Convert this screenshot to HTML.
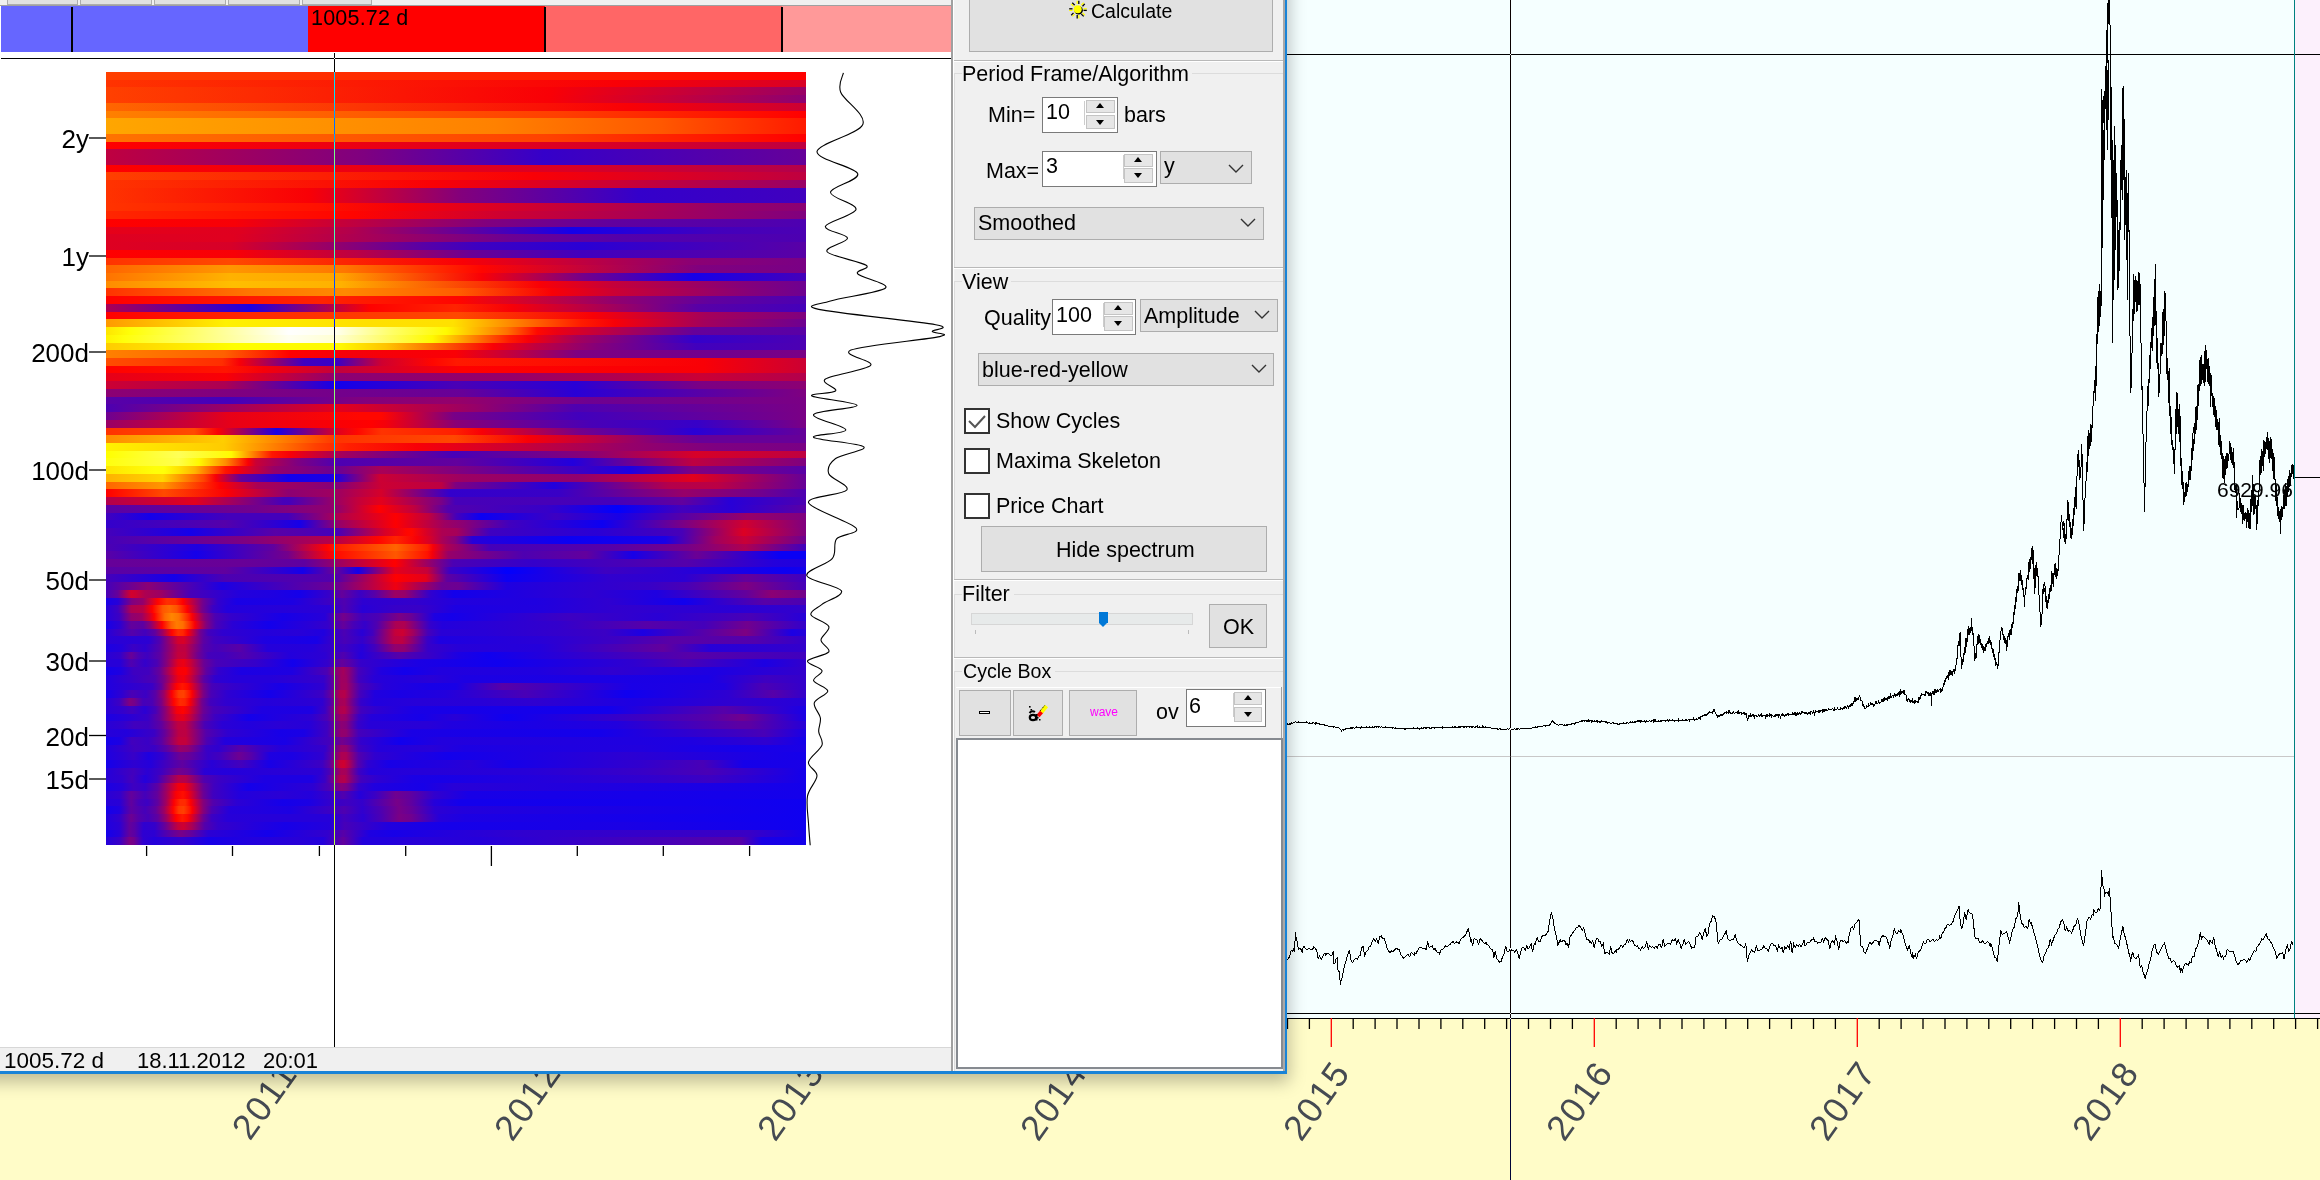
<!DOCTYPE html>
<html><head><meta charset="utf-8">
<style>
*{box-sizing:border-box;}
html,body{margin:0;padding:0;}
body{width:2320px;height:1180px;overflow:hidden;position:relative;background:#fffcc8;font-family:"Liberation Sans",sans-serif;color:#000;}
.a{position:absolute;}
.t{position:absolute;white-space:nowrap;line-height:1;}
#chart{left:1286px;top:0;width:1034px;height:1013px;background:#f5ffff;}
#pink{left:2295px;top:0;width:25px;height:1013px;background:#fcf0fc;}
svg{position:absolute;left:0;top:0;overflow:visible;}
#lwin{left:0;top:0;width:951px;height:1071px;background:#fff;overflow:hidden;}
#panel{left:951px;top:0;width:336px;height:1073px;background:#f0f0f0;overflow:hidden;}
.btn{position:absolute;background:#e1e1e1;border:1px solid #adadad;}
.spin{position:absolute;background:#fff;border:1px solid #7a7a7a;}
.sb{position:absolute;background:#e6e6e6;border:1px solid #c4c4c4;}
.combo{position:absolute;background:#e1e1e1;border:1px solid #adadad;}
.sep{position:absolute;left:3px;width:329px;height:1px;background:#b9b9b9;}
.sepw{position:absolute;left:3px;width:329px;height:1px;background:#fff;}
.gl{position:absolute;height:1px;background:#dcdcdc;}
.cb{position:absolute;width:26px;height:26px;border:2px solid #333;background:#fff;}
.f21{font-size:21.5px;}
</style></head><body>
<div id="chart" class="a"></div>
<div id="pink" class="a"></div>
<div class="a" style="left:1286px;top:756px;width:1009px;height:1px;background:#c8c8c8"></div>
<div class="a" style="left:1286px;top:54px;width:1034px;height:1px;background:#000"></div>
<div class="a" style="left:1286px;top:1013px;width:1034px;height:1px;background:#000"></div>
<div class="a" style="left:1286px;top:1014px;width:1009px;height:4px;background:#f5ffff"></div><div class="a" style="left:2295px;top:1014px;width:25px;height:4px;background:#fcf0fc"></div>
<div class="a" style="left:2294px;top:0;width:1px;height:1018px;background:#008080"></div>
<div class="a" style="left:0px;top:1018px;width:2320px;height:1px;background:#000"></div>
<div class="a" style="left:2295px;top:477px;width:25px;height:1px;background:#000"></div>
<div class="t" style="left:2217px;top:479px;font-size:21px;">6929.96</div>
<svg width="2320" height="1180" viewBox="0 0 2320 1180">
<path d="M1945.5,678.5V682.1M1946.5,676.6V679.3M1947.5,674.5V677.5M1948.5,673.2V674.6M1949.5,670.8V674.7M1950.5,670.3V675.2M1951.5,670.8V672.8M1952.5,670.7V672.3M1953.5,671.0V672.0M1954.5,670.5V674.1M1955.5,665.9V669.1M1956.5,659.5V661.9M1959.5,638.4V642.3M1960.5,637.1V638.9M1961.5,664.8V668.8M1962.5,659.5V664.8M1963.5,656.9V661.1M1964.5,650.9V655.2M1965.5,647.5V652.6M1966.5,643.5V645.7M1968.5,632.5V634.7M1969.5,629.1V633.8M1970.5,627.0V631.5M1971.5,625.8V629.4M1972.5,626.9V630.1M1973.5,636.3V642.1M1974.5,648.7V653.5M1975.5,653.4V658.0M1976.5,647.6V652.4M1977.5,640.7V645.3M1978.5,634.1V636.0M1979.5,635.4V638.7M1980.5,639.0V642.6M1982.5,644.5V650.0M1983.5,648.1V652.6M1984.5,646.7V648.7M1985.5,643.8V647.6M1988.5,641.5V643.7M1989.5,639.0V643.1M1990.5,639.6V644.5M1991.5,643.4V645.5M1992.5,647.8V649.5M1993.5,649.9V654.7M1994.5,653.7V657.0M1995.5,659.0V661.6M1996.5,663.0V665.1M1997.5,667.0V668.9M2000.5,635.1V640.3M2001.5,630.3V631.3M2003.5,633.9V637.3M2004.5,638.3V643.4M2005.5,640.0V643.6M2006.5,640.5V646.8M2007.5,638.1V644.0M2009.5,633.2V639.9M2011.5,628.0V635.1M2012.5,622.1V626.7M2013.5,614.1V617.4M2014.5,605.1V614.5M2015.5,600.6V607.4M2016.5,593.8V601.8M2017.5,585.9V590.2M2018.5,580.4V585.1M2019.5,573.7V581.4M2021.5,580.4V583.7M2022.5,586.7V589.8M2024.5,598.4V606.5M2025.5,588.4V593.4M2026.5,578.6V589.4M2028.5,566.6V572.8M2029.5,562.2V572.2M2030.5,556.5V568.7M2031.5,554.4V560.3M2032.5,558.5V564.1M2033.5,570.4V576.1M2034.5,579.4V587.6M2035.5,574.4V582.0M2036.5,562.3V571.2M2037.5,569.8V574.6M2038.5,586.1V589.2M2039.5,601.8V604.5M2040.5,615.3V620.6M2041.5,615.7V622.9M2043.5,589.1V594.1M2044.5,587.5V591.8M2045.5,592.3V595.8M2046.5,595.9V602.7M2047.5,600.1V606.2M2048.5,594.3V599.3M2050.5,586.9V591.5M2051.5,578.5V586.0M2052.5,573.3V584.0M2054.5,569.0V574.7M2055.5,567.7V577.4M2056.5,569.9V578.8M2059.5,545.2V553.3M2062.5,524.2V530.4M2063.5,527.5V537.8M2064.5,534.6V541.0M2065.5,538.5V543.9M2066.5,523.8V527.6M2067.5,505.3V519.9M2068.5,509.1V521.3M2070.5,528.1V535.7M2071.5,527.9V539.3M2072.5,518.9V530.7M2073.5,513.3V525.6M2075.5,489.1V507.0M2076.5,476.9V485.1M2077.5,463.3V476.3M2078.5,450.1V466.0M2079.5,459.5V474.3M2080.5,468.4V476.1M2081.5,448.4V465.8M2083.5,518.8V524.3M2084.5,505.0V520.9M2085.5,482.9V489.1M2086.5,461.5V471.8M2087.5,451.3V456.0M2088.5,437.5V448.9M2089.5,432.8V441.0M2090.5,431.5V441.0M2091.5,425.8V436.1M2092.5,413.8V424.0M2093.5,399.4V405.3M2094.5,379.6V393.3M2096.5,334.3V345.9M2097.5,297.1V336.5M2098.5,299.8V332.1M2099.5,284.4V326.3M2100.5,291.2V317.4M2101.5,254.0V280.7M2102.5,123.6V143.2M2103.5,108.1V123.3M2104.5,91.0V128.7M2106.5,55.3V86.4M2107.5,30.3V49.8M2108.5,17.0V23.8M2109.5,-4.5V22.0M2110.5,48.9V61.0M2111.5,122.2V165.0M2112.5,309.7V338.9M2113.5,241.0V265.2M2114.5,161.3V184.3M2115.5,160.1V182.2M2116.5,198.3V216.7M2117.5,235.7V251.0M2118.5,274.8V287.3M2120.5,192.9V229.6M2121.5,153.8V179.3M2122.5,101.2V140.8M2123.5,95.5V132.5M2124.5,145.6V172.6M2127.5,200.4V235.7M2128.5,173.3V190.4M2129.5,256.7V268.4M2130.5,351.2V366.1M2131.5,359.2V376.9M2132.5,311.9V340.6M2133.5,285.2V320.6M2134.5,279.7V313.9M2136.5,279.7V312.0M2137.5,282.3V294.0M2138.5,282.1V294.5M2139.5,273.3V305.3M2140.5,291.8V325.2M2142.5,400.8V410.1M2143.5,451.1V459.5M2145.5,468.9V476.3M2146.5,423.8V431.4M2148.5,383.2V396.9M2149.5,370.3V382.8M2150.5,355.5V368.8M2151.5,342.8V348.1M2152.5,325.0V350.6M2153.5,298.7V335.6M2154.5,282.5V325.7M2155.5,295.8V324.8M2156.5,326.6V339.2M2157.5,350.4V368.8M2158.5,373.7V393.6M2159.5,374.3V385.2M2160.5,360.3V364.7M2161.5,347.6V356.2M2162.5,331.7V340.6M2163.5,314.7V345.0M2164.5,292.5V336.1M2165.5,303.0V313.8M2167.5,368.7V380.2M2168.5,383.8V398.2M2169.5,399.6V416.1M2170.5,418.1V434.4M2173.5,451.1V457.1M2174.5,457.5V465.4M2175.5,435.3V439.0M2176.5,405.3V419.6M2177.5,396.2V404.6M2178.5,409.2V427.6M2179.5,429.2V442.4M2180.5,439.3V450.0M2181.5,458.4V472.4M2182.5,470.9V489.0M2183.5,487.0V500.7M2185.5,486.7V492.1M2187.5,483.5V492.3M2188.5,476.8V486.9M2189.5,474.7V479.6M2190.5,465.6V471.9M2191.5,452.0V462.9M2192.5,445.6V459.6M2193.5,438.5V450.5M2194.5,423.4V444.4M2196.5,406.0V418.1M2197.5,399.9V416.9M2199.5,381.9V391.4M2200.5,372.5V382.5M2201.5,367.6V384.1M2202.5,364.4V380.0M2203.5,363.8V382.8M2204.5,368.3V377.0M2205.5,362.9V381.5M2206.5,359.9V369.0M2207.5,358.8V368.1M2208.5,358.0V377.1M2209.5,366.1V374.9M2210.5,374.2V384.4M2211.5,381.5V396.1M2212.5,392.5V401.9M2214.5,404.0V416.6M2215.5,408.3V427.4M2216.5,413.3V430.2M2218.5,425.2V445.0M2220.5,439.6V454.7M2221.5,448.3V458.9M2222.5,458.4V478.0M2223.5,465.3V471.0M2224.5,467.0V482.7M2225.5,468.7V474.3M2226.5,459.3V469.2M2227.5,455.6V468.4M2229.5,446.4V451.7M2230.5,446.2V459.2M2231.5,448.7V454.9M2232.5,451.6V464.5M2233.5,451.1V467.7M2234.5,471.6V485.8M2236.5,503.4V518.4M2237.5,501.7V505.4M2239.5,493.1V503.1M2240.5,498.0V512.0M2241.5,505.8V509.1M2242.5,511.9V523.7M2243.5,511.1V517.9M2244.5,513.4V519.6M2246.5,512.8V528.0M2247.5,514.0V520.3M2248.5,517.8V527.5M2249.5,516.1V523.3M2250.5,517.1V523.9M2251.5,496.7V511.6M2252.5,495.8V506.2M2253.5,500.1V514.1M2254.5,499.0V508.2M2255.5,502.5V509.1M2256.5,505.3V512.2M2257.5,506.9V515.2M2258.5,491.3V502.9M2259.5,473.8V483.9M2261.5,455.3V462.5M2262.5,451.4V461.9M2263.5,449.9V455.6M2265.5,441.6V453.0M2266.5,437.6V449.4M2267.5,440.7V450.4M2268.5,444.2V450.8M2269.5,446.6V463.1M2270.5,446.4V458.3M2271.5,454.2V458.7M2272.5,454.8V470.7M2273.5,464.1V479.1M2274.5,473.6V478.8M2275.5,483.8V491.1M2276.5,489.3V501.7M2277.5,502.0V515.7M2278.5,509.7V517.1M2279.5,513.3V519.0M2280.5,508.7V524.1M2281.5,511.4V516.9M2282.5,506.5V517.0M2283.5,499.8V509.3M2284.5,490.4V504.1M2285.5,486.5V503.3M2286.5,485.6V495.4M2287.5,479.4V497.3M2288.5,475.7V492.2M2289.5,470.4V486.3M2290.5,472.9V478.3M2291.5,464.8V475.7M2293.5,472.0V478.7M2101.5,89V250M2102.5,100V248M2103.5,130V200M2104.5,110V160M2106.5,80V130M2107.5,70V150M2108.5,60V120M2110.5,90V160M2112.5,140V240M2113.5,160V300M2114.5,180V280M2115.5,150V250M2117.5,200V290M2120.5,160V230M2122.5,95V200M2123.5,92V180M2124.5,120V240M2126.5,170V260M2127.5,200V300M2129.5,230V290" stroke="#000" stroke-width="1" fill="none" shape-rendering="crispEdges"/>
<polyline points="1286.4,724.7 1286.4,725.0 1286.9,724.7 1287.4,723.5 1287.9,724.5 1288.4,724.1 1288.9,724.3 1289.4,724.0 1289.9,723.6 1290.4,724.2 1290.9,723.1 1291.4,723.1 1291.9,722.8 1292.4,723.5 1292.9,723.1 1293.4,722.7 1293.9,722.6 1294.4,722.6 1294.9,721.9 1295.4,721.6 1295.9,721.7 1296.1,722.0 1296.4,722.4 1296.9,722.0 1297.4,722.2 1297.9,722.0 1298.4,722.0 1298.9,721.6 1299.4,722.4 1299.9,722.6 1300.4,722.4 1300.9,721.9 1301.4,722.6 1301.9,722.2 1302.4,722.5 1302.9,722.5 1303.4,722.0 1303.9,722.0 1304.4,722.5 1304.9,722.8 1305.4,722.6 1305.9,722.8 1306.4,722.5 1306.9,721.7 1307.4,722.3 1307.9,722.8 1308.4,723.8 1308.9,723.6 1309.4,722.9 1309.9,723.1 1310.4,723.2 1310.9,723.3 1311.4,723.2 1311.9,723.5 1312.4,723.0 1312.9,723.3 1313.4,722.8 1313.9,722.8 1314.4,723.6 1314.9,723.7 1315.2,723.5 1315.4,723.8 1315.9,722.3 1316.4,723.5 1316.9,723.9 1317.4,723.8 1317.9,723.9 1318.4,723.9 1318.9,723.5 1319.4,724.0 1319.9,724.1 1320.4,724.4 1320.9,724.2 1321.4,724.5 1321.9,724.7 1322.4,724.6 1322.9,725.1 1323.4,725.0 1323.9,724.8 1324.4,725.0 1324.9,725.7 1325.4,725.3 1325.9,725.7 1326.4,725.5 1326.9,725.6 1327.4,725.6 1327.9,725.9 1328.4,726.0 1328.9,726.9 1329.4,726.7 1329.9,725.9 1330.4,726.6 1330.9,726.9 1331.4,726.9 1331.9,727.0 1332.4,726.5 1332.9,726.5 1333.4,727.0 1333.9,727.4 1334.4,726.8 1334.9,727.0 1335.4,727.8 1335.9,727.8 1336.4,727.3 1336.9,727.7 1337.4,727.5 1337.9,727.6 1338.4,727.7 1338.6,728.0 1338.9,728.1 1339.4,728.4 1339.9,729.0 1340.4,729.4 1340.9,729.6 1341.4,730.7 1341.5,730.3 1341.9,729.9 1342.4,729.7 1342.9,729.6 1343.4,729.8 1343.9,730.2 1344.4,729.6 1344.9,729.2 1345.4,729.0 1345.9,729.3 1346.4,728.7 1346.9,728.8 1347.4,729.0 1347.9,728.8 1348.4,728.4 1348.9,728.4 1349.4,728.2 1349.9,728.1 1350.3,728.0 1350.4,728.0 1350.9,727.7 1351.4,727.9 1351.9,728.2 1352.4,728.2 1352.9,727.7 1353.4,727.6 1353.9,728.0 1354.4,728.0 1354.9,728.0 1355.4,727.5 1355.9,727.4 1356.4,727.1 1356.9,727.8 1357.4,727.9 1357.9,727.0 1358.4,727.9 1358.9,727.7 1359.4,727.3 1359.9,727.6 1360.4,727.3 1360.9,728.4 1361.4,726.8 1361.9,727.5 1362.4,727.8 1362.9,727.6 1363.4,727.5 1363.9,727.3 1364.4,727.7 1364.9,727.8 1365.4,727.4 1365.9,727.7 1366.4,727.1 1366.9,727.6 1367.4,727.3 1367.9,727.4 1368.4,727.3 1368.9,727.0 1369.4,726.9 1369.9,727.5 1370.4,727.2 1370.9,727.3 1371.4,727.2 1371.9,727.5 1372.4,726.9 1372.9,727.3 1373.4,727.1 1373.9,727.0 1374.4,726.9 1374.9,727.2 1375.4,727.0 1375.9,726.1 1376.4,726.9 1376.9,727.3 1377.4,726.7 1377.9,727.0 1378.4,727.2 1378.9,726.6 1379.4,726.6 1379.6,726.8 1379.9,727.0 1380.4,727.2 1380.9,727.2 1381.4,726.9 1381.9,726.7 1382.4,727.3 1382.9,727.0 1383.4,727.7 1383.9,727.8 1384.4,727.2 1384.9,727.1 1385.4,727.0 1385.9,727.7 1386.4,727.7 1386.9,727.6 1387.4,727.3 1387.9,727.6 1388.4,727.4 1388.9,727.9 1389.4,727.7 1389.9,727.7 1390.4,727.9 1390.9,727.8 1391.4,727.9 1391.9,727.6 1392.4,728.0 1392.9,728.2 1393.4,727.9 1393.9,728.1 1394.4,728.2 1394.9,728.0 1395.4,727.8 1395.9,728.4 1396.4,728.4 1396.9,728.1 1397.4,728.8 1397.9,728.6 1398.4,728.3 1398.9,728.5 1399.4,728.4 1399.9,728.3 1400.4,728.3 1400.9,728.8 1401.4,728.4 1401.9,728.6 1402.4,729.0 1402.9,728.9 1403.0,728.8 1403.4,728.7 1403.9,728.8 1404.4,728.5 1404.9,729.4 1405.4,729.0 1405.9,728.7 1406.4,728.8 1406.9,728.8 1407.4,728.9 1407.9,728.7 1408.4,728.3 1408.9,728.7 1409.4,728.6 1409.9,728.4 1410.4,728.2 1410.9,728.7 1411.4,728.6 1411.9,728.8 1412.4,728.7 1412.9,728.2 1413.4,727.7 1413.9,728.3 1414.4,728.6 1414.9,728.7 1415.4,728.7 1415.9,728.6 1416.4,728.6 1416.9,728.6 1417.4,728.5 1417.9,727.6 1418.4,728.5 1418.9,728.7 1419.4,729.0 1419.9,728.2 1420.4,728.5 1420.9,728.2 1421.4,728.3 1421.9,727.8 1422.4,728.1 1422.9,728.2 1423.4,727.8 1423.9,728.2 1424.4,727.9 1424.9,728.1 1425.4,728.3 1425.9,727.6 1426.4,727.8 1426.9,728.3 1427.4,727.9 1427.9,727.8 1428.4,727.7 1428.9,728.1 1429.4,727.8 1429.9,728.3 1430.4,728.3 1430.9,728.6 1431.4,727.8 1431.9,728.0 1432.4,727.2 1432.9,727.5 1433.4,727.8 1433.9,727.9 1434.4,728.1 1434.9,727.7 1435.4,727.7 1435.9,727.7 1436.4,727.9 1436.9,728.1 1437.4,727.7 1437.9,727.8 1438.4,727.9 1438.9,727.9 1439.4,727.6 1439.9,727.6 1440.4,727.9 1440.9,727.6 1441.4,727.5 1441.9,727.6 1442.4,727.9 1442.9,726.8 1443.4,727.2 1443.9,727.7 1444.4,727.2 1444.9,727.8 1445.4,727.8 1445.9,727.4 1446.4,727.6 1446.9,728.2 1447.4,727.7 1447.9,727.3 1448.4,727.6 1448.9,727.5 1449.4,727.7 1449.9,727.7 1450.4,727.2 1450.9,727.6 1451.4,727.3 1451.9,727.1 1452.4,727.5 1452.9,726.5 1453.4,727.5 1453.9,727.6 1454.4,726.9 1454.9,727.4 1455.4,726.9 1455.9,727.3 1456.4,727.1 1456.9,727.3 1457.4,727.5 1457.9,727.0 1458.4,726.7 1458.9,727.2 1459.4,726.8 1459.9,727.4 1460.4,726.9 1460.9,726.7 1461.4,726.8 1461.9,726.6 1462.4,726.9 1462.9,726.8 1463.4,726.7 1463.9,727.2 1464.4,726.9 1464.9,727.2 1465.4,726.6 1465.9,726.8 1466.4,727.2 1466.9,726.3 1467.4,726.5 1467.6,726.8 1467.9,726.6 1468.4,726.3 1468.9,726.8 1469.4,727.0 1469.9,726.7 1470.4,726.7 1470.9,726.6 1471.4,727.1 1471.9,727.3 1472.4,727.2 1472.9,726.7 1473.4,726.9 1473.9,727.0 1474.4,727.3 1474.9,727.0 1475.4,727.3 1475.9,726.8 1476.4,726.7 1476.9,727.1 1477.4,726.1 1477.9,727.3 1478.4,727.5 1478.9,727.2 1479.4,726.9 1479.9,727.5 1480.4,727.2 1480.9,727.1 1481.4,727.3 1481.9,727.4 1482.4,726.3 1482.9,727.5 1483.4,727.0 1483.9,727.5 1484.4,727.5 1484.9,727.1 1485.2,727.3 1485.4,727.0 1485.9,727.7 1486.4,727.4 1486.9,727.8 1487.4,727.6 1487.9,727.6 1488.4,727.5 1488.9,728.1 1489.4,727.7 1489.9,727.8 1490.4,727.9 1490.9,727.7 1491.4,728.1 1491.9,728.3 1492.4,728.5 1492.9,727.9 1493.4,728.3 1493.9,728.2 1494.4,728.7 1494.9,728.6 1495.4,728.5 1495.9,728.9 1496.4,728.4 1496.9,728.5 1497.4,729.0 1497.9,728.7 1498.4,729.2 1498.9,728.9 1499.4,728.7 1499.9,728.4 1500.4,729.3 1500.9,728.9 1501.4,729.0 1501.9,729.6 1502.4,729.7 1502.7,729.4 1502.9,729.3 1503.4,729.3 1503.9,729.4 1504.4,729.3 1504.9,729.1 1505.4,729.4 1505.9,729.6 1506.4,729.5 1506.9,729.0 1507.4,728.7 1507.9,729.1 1508.4,729.1 1508.9,729.0 1509.4,728.9 1509.9,729.1 1510.4,728.8 1510.9,729.4 1511.4,729.4 1511.9,729.0 1512.4,729.1 1512.9,729.6 1513.4,729.3 1513.9,729.0 1514.4,728.9 1514.9,729.0 1515.4,729.1 1515.9,729.1 1516.4,728.8 1516.9,729.2 1517.4,729.1 1517.9,728.5 1518.4,728.5 1518.9,729.1 1519.4,729.0 1519.9,729.0 1520.4,728.8 1520.9,728.5 1521.4,728.6 1521.9,728.7 1522.4,728.6 1522.9,729.0 1523.4,728.9 1523.9,728.5 1524.4,728.5 1524.9,728.6 1525.4,728.5 1525.9,728.5 1526.4,728.6 1526.9,728.6 1527.4,728.9 1527.9,728.5 1528.4,728.2 1528.9,728.8 1529.1,728.5 1529.4,728.1 1529.9,728.3 1530.4,728.2 1530.9,728.2 1531.4,728.1 1531.9,728.2 1532.4,727.8 1532.9,727.8 1533.4,727.9 1533.9,727.7 1534.4,727.4 1534.9,727.6 1535.4,727.1 1535.9,728.0 1536.4,727.4 1536.9,727.4 1537.4,727.0 1537.9,726.7 1538.4,726.8 1538.9,727.1 1539.4,726.5 1539.9,726.7 1540.4,726.2 1540.9,726.1 1541.4,726.1 1541.9,726.2 1542.4,726.2 1542.9,726.3 1543.4,725.7 1543.9,726.1 1544.4,725.8 1544.9,725.1 1545.4,726.1 1545.9,725.3 1546.4,725.7 1546.9,725.2 1547.4,725.5 1547.9,724.9 1548.4,725.6 1548.9,724.9 1549.4,724.7 1549.6,725.0 1549.9,724.9 1550.4,723.7 1550.9,723.0 1551.4,722.0 1551.9,721.4 1552.4,721.0 1552.6,720.6 1552.9,720.9 1553.4,721.9 1553.9,722.2 1554.4,722.3 1554.9,723.3 1555.4,723.4 1555.9,723.5 1556.4,724.4 1556.9,724.9 1557.0,725.0 1557.4,724.8 1557.9,724.8 1558.4,725.4 1558.9,725.2 1559.4,724.9 1559.9,724.8 1560.4,724.6 1560.9,725.2 1561.4,724.8 1561.9,724.7 1562.4,724.7 1562.9,724.9 1563.4,725.2 1563.9,725.1 1564.4,724.7 1564.9,725.8 1565.4,725.1 1565.9,725.4 1566.4,724.7 1566.9,725.5 1567.2,725.0 1567.4,725.4 1567.9,724.5 1568.4,724.5 1568.9,724.7 1569.4,724.5 1569.9,724.3 1570.4,724.6 1570.9,724.1 1571.4,724.3 1571.9,723.4 1572.4,723.8 1572.9,724.0 1573.4,723.5 1573.9,723.7 1574.4,724.1 1574.9,722.9 1575.4,722.7 1575.9,723.2 1576.4,722.5 1576.9,723.1 1577.4,722.5 1577.9,722.8 1578.4,722.0 1578.9,722.2 1579.4,721.5 1579.9,721.3 1580.4,721.2 1580.9,721.7 1581.4,721.1 1581.9,721.6 1582.4,720.9 1582.9,720.5 1583.4,720.5 1583.9,721.1 1584.4,721.1 1584.8,720.6 1584.9,720.8 1585.4,720.3 1585.9,720.4 1586.4,721.2 1586.9,720.1 1587.4,720.5 1587.9,721.2 1588.4,720.1 1588.9,721.5 1589.4,721.4 1589.9,720.8 1590.4,721.0 1590.9,720.8 1591.4,720.6 1591.9,722.3 1592.4,720.6 1592.9,721.0 1593.4,721.5 1593.9,721.9 1594.4,720.6 1594.9,721.4 1595.4,721.5 1595.9,721.2 1596.4,721.3 1596.9,720.7 1597.4,721.8 1597.9,720.6 1598.4,721.7 1598.9,721.3 1599.4,721.5 1599.9,722.7 1600.4,722.6 1600.9,721.2 1601.4,720.9 1601.9,721.3 1602.4,721.4 1602.4,721.5 1602.9,721.4 1603.4,721.6 1603.9,721.6 1604.4,721.7 1604.9,721.7 1605.4,722.1 1605.9,721.0 1606.4,721.9 1606.9,722.3 1607.4,723.0 1607.9,723.0 1608.4,722.7 1608.9,723.0 1609.4,722.7 1609.9,722.6 1610.4,723.5 1610.9,723.0 1611.4,723.1 1611.9,723.2 1612.4,722.1 1612.9,722.4 1613.4,722.9 1613.9,724.0 1614.4,723.1 1614.9,723.5 1615.4,723.6 1615.9,723.5 1616.4,723.5 1616.9,723.6 1617.0,724.1 1617.4,723.7 1617.9,724.3 1618.4,724.2 1618.9,724.0 1619.4,724.0 1619.9,722.9 1620.4,723.7 1620.9,723.8 1621.4,723.9 1621.9,723.3 1622.4,723.2 1622.9,723.5 1623.4,723.6 1623.9,722.8 1624.4,723.1 1624.9,723.4 1625.4,723.2 1625.9,723.8 1626.4,722.5 1626.9,722.5 1627.4,722.5 1627.9,722.8 1628.4,723.6 1628.9,722.9 1629.4,722.2 1629.9,722.1 1630.4,722.6 1630.9,721.8 1631.4,722.3 1631.9,722.2 1632.4,721.8 1632.9,722.3 1633.4,722.6 1633.9,722.5 1634.4,722.2 1634.9,721.4 1635.4,722.3 1635.9,721.8 1636.4,721.4 1636.9,722.1 1637.4,721.0 1637.6,721.5 1637.9,721.9 1638.4,721.2 1638.9,722.0 1639.4,720.8 1639.9,721.2 1640.4,722.1 1640.9,720.8 1641.4,721.0 1641.9,722.0 1642.4,721.9 1642.9,721.1 1643.4,721.4 1643.9,721.2 1644.4,721.0 1644.9,721.9 1645.4,722.3 1645.9,721.0 1646.4,720.8 1646.9,721.4 1647.4,721.1 1647.9,721.2 1648.4,721.3 1648.9,721.2 1649.4,720.7 1649.9,720.6 1650.4,721.5 1650.9,721.5 1651.4,720.7 1651.9,721.2 1652.4,720.6 1652.9,721.2 1653.4,720.4 1653.9,722.2 1654.4,720.3 1654.9,721.3 1655.4,719.9 1655.9,721.4 1656.4,721.4 1656.9,720.9 1657.4,721.2 1657.9,721.5 1658.4,721.0 1658.9,721.7 1659.4,721.5 1659.9,721.3 1660.4,721.2 1660.9,720.2 1661.4,721.3 1661.9,721.3 1662.4,720.1 1662.9,720.2 1663.4,720.6 1663.9,721.1 1664.4,720.9 1664.9,720.7 1665.4,721.2 1665.9,720.0 1666.4,720.3 1666.9,719.9 1667.4,719.6 1667.9,720.5 1668.4,720.3 1668.9,721.2 1669.4,720.8 1669.9,719.8 1670.4,720.4 1670.9,720.3 1671.4,720.3 1671.9,720.6 1672.4,720.1 1672.9,719.8 1673.4,720.5 1673.9,720.8 1674.4,721.0 1674.9,720.0 1675.4,720.7 1675.9,720.1 1676.4,720.1 1676.9,720.2 1677.4,720.3 1677.9,720.9 1678.4,719.5 1678.9,721.5 1679.4,720.7 1679.9,720.8 1680.4,720.5 1680.9,720.5 1681.4,720.9 1681.9,720.4 1682.4,720.5 1682.9,719.6 1683.4,720.4 1683.9,720.7 1684.4,720.8 1684.9,720.2 1685.4,720.3 1685.9,719.8 1686.4,720.0 1686.9,719.7 1687.4,720.1 1687.9,720.2 1688.4,719.5 1688.9,720.0 1689.4,720.6 1689.9,719.5 1690.4,719.2 1690.9,719.2 1691.4,719.4 1691.9,719.6 1692.4,719.6 1692.9,719.8 1693.4,718.3 1693.9,719.5 1694.4,719.8 1694.9,720.2 1695.4,719.5 1695.9,720.0 1696.2,719.7 1696.4,719.5 1696.9,718.6 1697.4,719.5 1697.9,719.5 1698.4,717.3 1698.9,717.6 1699.4,718.0 1699.9,717.1 1700.4,718.4 1700.9,716.8 1701.4,716.8 1701.9,716.0 1702.0,716.8 1702.4,716.8 1702.9,715.8 1703.4,715.8 1703.9,715.3 1704.4,715.2 1704.9,714.7 1705.4,714.5 1705.9,715.4 1706.4,714.9 1706.9,714.8 1707.4,714.6 1707.9,713.3 1708.4,713.0 1708.9,712.1 1709.4,711.8 1709.9,712.8 1710.4,712.8 1710.9,712.7 1711.4,712.0 1711.9,712.0 1712.4,713.7 1712.9,711.4 1713.4,709.8 1713.8,710.3 1713.9,711.2 1714.4,710.5 1714.9,712.0 1715.4,712.9 1715.9,713.7 1716.4,715.1 1716.9,715.0 1717.4,715.9 1717.9,717.7 1718.2,716.8 1718.4,716.4 1718.9,715.7 1719.4,715.5 1719.9,716.4 1720.4,715.1 1720.9,715.6 1721.4,715.6 1721.9,714.1 1722.4,715.4 1722.9,714.9 1723.4,713.7 1723.9,713.4 1724.4,712.9 1724.9,713.2 1725.4,712.7 1725.5,712.7 1725.9,713.1 1726.4,713.2 1726.9,711.8 1727.4,712.8 1727.9,713.1 1728.4,713.2 1728.9,710.2 1729.4,711.7 1729.9,712.2 1730.4,712.2 1730.9,713.4 1731.4,713.9 1731.9,713.8 1732.4,712.3 1732.9,712.7 1733.4,711.9 1733.9,713.1 1734.4,713.7 1734.9,712.9 1735.4,712.7 1735.9,713.0 1736.4,712.4 1736.9,712.5 1737.4,712.1 1737.9,713.3 1738.4,711.8 1738.9,713.4 1739.4,713.7 1739.9,712.3 1740.4,712.3 1740.9,712.7 1741.4,713.8 1741.9,712.7 1742.4,713.2 1742.9,713.0 1743.4,713.5 1743.9,712.5 1744.4,714.1 1744.9,712.4 1745.4,714.1 1745.9,714.5 1746.0,713.3 1746.4,714.5 1746.9,717.6 1747.4,718.3 1747.5,719.7 1747.9,719.1 1748.4,718.0 1748.9,716.3 1749.0,715.6 1749.4,716.2 1749.9,716.3 1750.4,714.8 1750.9,716.7 1751.4,716.3 1751.9,715.8 1752.4,714.6 1752.9,715.4 1753.4,714.7 1753.9,716.3 1754.4,717.3 1754.9,715.8 1755.4,715.1 1755.9,715.0 1756.4,716.5 1756.9,716.5 1757.4,716.5 1757.9,716.1 1758.4,715.0 1758.9,715.8 1759.4,715.9 1759.9,716.2 1760.4,714.9 1760.9,715.8 1761.4,714.6 1761.9,716.5 1762.4,716.0 1762.9,715.4 1763.4,715.7 1763.9,715.7 1764.4,715.2 1764.9,715.8 1765.4,717.4 1765.9,715.1 1766.4,714.8 1766.9,716.3 1767.4,716.3 1767.9,714.8 1768.4,715.6 1768.9,715.2 1769.4,715.8 1769.9,713.7 1770.4,714.7 1770.9,715.4 1771.4,716.3 1771.9,714.7 1772.4,715.4 1772.9,715.5 1773.4,716.3 1773.9,715.9 1774.4,715.7 1774.9,716.4 1775.4,716.1 1775.9,714.7 1776.4,714.7 1776.9,715.2 1777.4,714.6 1777.9,716.0 1778.2,715.6 1778.4,716.3 1778.9,714.6 1779.4,715.1 1779.9,715.4 1780.4,717.6 1780.9,716.1 1781.4,715.1 1781.9,715.7 1782.4,714.3 1782.9,715.8 1783.4,714.7 1783.9,715.1 1784.4,715.9 1784.9,714.9 1785.4,714.4 1785.9,715.5 1786.4,715.6 1786.9,714.5 1787.4,713.9 1787.9,714.5 1788.4,713.9 1788.9,715.3 1789.4,714.6 1789.9,714.5 1790.4,714.2 1790.9,715.0 1791.4,714.4 1791.9,715.1 1792.4,713.5 1792.9,714.8 1793.4,713.3 1793.9,713.3 1794.4,715.0 1794.9,712.3 1795.4,712.9 1795.9,716.4 1796.4,713.5 1796.9,713.4 1797.4,713.8 1797.9,712.8 1798.4,714.1 1798.9,713.0 1799.4,712.9 1799.9,713.9 1800.4,714.4 1800.9,713.3 1801.4,713.3 1801.9,710.9 1802.4,712.7 1802.9,712.7 1803.4,712.4 1803.9,712.2 1804.4,713.1 1804.9,713.0 1805.4,712.5 1805.9,713.7 1806.4,712.6 1806.9,712.9 1807.4,713.8 1807.5,712.7 1807.9,714.1 1808.4,712.2 1808.9,712.3 1809.4,713.4 1809.9,712.2 1810.4,713.3 1810.9,711.5 1811.4,711.6 1811.9,712.0 1812.4,713.6 1812.9,713.0 1813.4,710.5 1813.9,712.5 1814.4,714.5 1814.9,712.8 1815.4,711.1 1815.9,711.6 1816.4,711.2 1816.9,710.9 1817.4,711.7 1817.9,711.3 1818.4,713.2 1818.9,710.9 1819.4,711.8 1819.9,710.0 1820.4,710.9 1820.9,710.0 1821.4,710.3 1821.9,710.9 1822.4,711.6 1822.9,709.7 1823.4,709.6 1823.9,711.6 1824.4,710.9 1824.9,709.8 1825.4,710.1 1825.9,709.1 1826.4,710.1 1826.9,711.0 1827.4,710.4 1827.9,710.0 1828.4,708.9 1828.9,709.9 1829.4,709.2 1829.9,709.4 1830.4,709.2 1830.9,709.4 1831.4,709.2 1831.9,709.6 1832.4,708.4 1832.9,708.9 1833.4,710.5 1833.9,709.8 1834.4,708.2 1834.9,710.2 1835.4,709.5 1835.9,709.2 1836.4,709.4 1836.9,709.8 1837.4,708.1 1837.9,709.0 1838.4,709.7 1838.9,709.1 1839.4,709.1 1839.9,709.3 1840.4,709.5 1840.9,707.8 1841.4,708.6 1841.9,708.8 1842.4,709.2 1842.9,708.0 1843.4,708.4 1843.9,707.4 1844.4,706.7 1844.9,708.8 1845.4,706.7 1845.9,707.4 1846.4,707.9 1846.9,707.1 1847.4,706.2 1847.9,707.0 1848.4,706.9 1848.6,707.4 1848.9,706.7 1849.4,706.0 1849.9,706.8 1850.4,706.3 1850.9,704.2 1851.4,705.8 1851.9,702.8 1852.4,704.8 1852.9,703.8 1853.4,703.3 1853.9,701.7 1854.4,701.8 1854.9,696.9 1855.4,698.8 1855.9,701.7 1856.4,698.8 1856.9,699.9 1857.4,699.3 1857.9,698.6 1858.4,699.2 1858.9,697.0 1859.4,695.5 1859.7,695.7 1859.9,696.9 1860.4,698.9 1860.9,700.2 1861.4,700.1 1861.9,701.1 1862.4,702.6 1862.9,705.6 1863.4,704.9 1863.9,706.3 1864.4,707.1 1864.7,708.9 1864.9,709.0 1865.4,708.4 1865.9,707.9 1866.4,706.7 1866.9,705.8 1867.4,706.2 1867.9,706.8 1868.4,704.8 1868.9,706.6 1869.1,705.1 1869.4,705.1 1869.9,705.0 1870.4,704.9 1870.9,703.0 1871.4,704.4 1871.9,703.7 1872.4,703.4 1872.9,704.7 1873.4,705.8 1873.9,704.0 1874.4,706.3 1874.9,704.6 1875.4,702.7 1875.9,701.7 1876.4,701.8 1876.9,703.6 1877.4,703.2 1877.9,703.2 1878.4,700.6 1878.9,700.9 1879.4,704.0 1879.9,702.2 1880.4,702.3 1880.9,702.2 1881.4,699.5 1881.9,701.4 1882.4,701.0 1882.9,699.8 1883.4,700.6 1883.9,698.5 1884.4,700.7 1884.9,697.1 1885.4,699.3 1885.9,700.0 1886.4,699.0 1886.9,698.2 1887.4,699.5 1887.9,696.8 1888.4,699.3 1888.9,695.7 1889.4,698.0 1889.9,697.7 1890.4,693.0 1890.9,698.0 1891.4,696.8 1891.9,696.3 1892.4,695.1 1892.9,695.1 1893.4,697.0 1893.9,696.5 1894.4,693.2 1894.9,693.8 1895.4,694.4 1895.9,696.6 1896.4,694.3 1896.9,696.0 1897.4,695.4 1897.9,693.1 1898.4,692.7 1898.9,694.0 1899.4,696.9 1899.9,691.3 1900.4,690.3 1900.9,694.3 1901.4,693.2 1901.9,691.1 1902.4,692.6 1902.9,692.0 1903.4,693.6 1903.9,690.0 1904.3,691.3 1904.4,692.0 1904.9,694.8 1905.4,694.6 1905.9,694.9 1906.4,697.4 1906.9,700.1 1907.2,700.0 1907.4,701.7 1907.9,699.8 1908.4,698.9 1908.9,699.0 1909.4,700.7 1909.9,699.4 1910.4,702.6 1910.9,702.5 1911.4,700.6 1911.9,700.7 1912.4,699.5 1912.9,702.4 1913.4,702.2 1913.9,701.4 1914.4,702.5 1914.9,700.7 1915.4,700.8 1915.9,702.2 1916.4,701.3 1916.9,701.7 1917.4,701.6 1917.5,703.0 1917.9,701.1 1918.4,702.9 1918.9,696.6 1919.4,700.1 1919.9,698.5 1920.4,698.1 1920.9,695.3 1921.4,696.0 1921.9,695.8 1921.9,694.2 1922.4,694.4 1922.9,694.5 1923.4,694.7 1923.9,694.1 1924.4,694.8 1924.9,695.9 1925.4,695.5 1925.9,691.2 1926.4,692.8 1926.9,692.6 1927.4,692.8 1927.9,693.0 1928.4,695.4 1928.9,693.0 1929.4,694.4 1929.9,693.0 1930.4,694.5 1930.9,692.7 1931.2,693.3 1931.2,706.0 1931.4,695.7 1931.5,693.0 1931.9,694.5 1932.4,691.0 1932.9,693.6 1933.4,692.7 1933.9,695.0 1934.4,693.0 1934.9,689.5 1935.4,689.4 1935.9,692.6 1936.4,690.2 1936.9,692.7 1937.4,691.3 1937.9,688.9 1938.4,692.1 1938.9,690.2 1939.4,689.1 1939.9,689.2 1940.4,688.7 1940.7,689.1 1940.9,693.3 1941.4,688.9 1941.9,691.6 1942.4,686.7 1942.9,687.9 1943.4,682.6 1943.9,684.8 1944.4,684.2 1944.9,679.9 1945.4,678.9 1945.9,678.3 1946.4,676.6 1946.9,677.1 1947.4,675.5 1947.9,675.0 1948.4,675.1 1948.9,680.0 1949.0,672.5 1949.4,670.3 1949.9,674.6 1950.4,673.8 1950.9,669.7 1951.4,674.9 1951.9,672.8 1952.4,674.8 1952.9,673.4 1953.4,668.7 1953.9,670.2 1954.4,668.9 1954.9,673.2 1954.9,671.3 1955.4,668.2 1955.9,667.7 1956.4,657.8 1956.9,659.4 1957.4,655.8 1957.9,645.7 1958.4,641.5 1958.9,646.2 1959.4,643.5 1959.9,633.9 1960.4,632.0 1960.4,634.5 1960.9,653.9 1961.3,666.6 1961.4,663.4 1961.9,661.1 1962.4,659.1 1962.9,663.2 1963.4,656.9 1963.9,653.5 1964.4,651.3 1964.9,648.0 1965.4,648.9 1965.6,648.8 1965.9,638.4 1966.4,647.0 1966.9,638.0 1967.4,642.1 1967.9,628.9 1968.4,635.4 1968.9,625.8 1969.1,629.8 1969.4,634.6 1969.9,633.3 1970.4,630.1 1970.9,631.7 1971.4,617.8 1971.9,629.5 1972.4,634.8 1972.7,627.4 1972.9,631.7 1973.4,635.8 1973.9,645.0 1974.4,649.0 1974.9,660.8 1975.1,657.1 1975.4,654.8 1975.9,655.6 1976.4,656.6 1976.9,644.7 1977.4,642.0 1977.9,636.8 1978.4,635.9 1978.6,634.5 1978.9,644.1 1979.4,637.9 1979.9,638.7 1980.4,641.2 1980.9,644.1 1981.4,643.6 1981.9,647.5 1982.4,649.2 1982.9,643.9 1983.4,652.1 1983.4,648.8 1983.9,649.0 1984.4,648.9 1984.9,651.3 1985.4,649.2 1985.9,647.8 1986.4,643.6 1986.9,644.8 1987.4,641.9 1987.9,643.2 1988.4,642.0 1988.9,638.8 1989.4,636.4 1989.9,638.5 1990.4,644.3 1990.5,640.5 1990.9,641.8 1991.4,643.9 1991.9,647.9 1992.4,651.0 1992.9,652.9 1993.4,648.9 1993.9,656.3 1994.4,656.1 1994.9,659.9 1995.4,658.3 1995.9,665.7 1996.4,662.8 1996.9,662.6 1997.4,667.4 1997.6,667.8 1997.9,667.2 1998.4,662.5 1998.9,652.5 1999.4,652.1 1999.9,641.6 2000.4,634.2 2000.9,632.4 2001.2,629.8 2001.4,628.8 2001.9,626.8 2002.4,630.5 2002.9,633.1 2003.4,639.5 2003.9,638.6 2004.4,643.2 2004.9,636.5 2005.4,644.2 2005.9,642.0 2005.9,644.0 2006.4,639.9 2006.9,650.7 2007.4,636.0 2007.9,637.6 2008.4,634.2 2008.9,635.0 2009.4,637.2 2009.9,630.2 2010.4,634.7 2010.9,628.7 2011.4,632.7 2011.8,629.8 2011.9,625.9 2012.4,626.7 2012.9,625.0 2013.4,620.9 2013.9,612.7 2014.2,610.8 2014.4,614.2 2014.9,607.0 2015.4,608.7 2015.9,597.8 2016.4,592.8 2016.9,589.1 2017.4,592.9 2017.9,586.8 2018.4,590.7 2018.9,573.0 2019.4,574.6 2019.9,576.9 2020.2,571.7 2020.4,569.9 2020.9,580.5 2021.4,575.0 2021.9,585.1 2022.4,580.0 2022.9,589.7 2023.4,587.6 2023.9,597.4 2024.4,595.5 2024.4,601.3 2024.9,597.6 2025.4,587.6 2025.9,587.5 2026.4,585.8 2026.9,579.6 2027.3,575.2 2027.4,579.1 2027.9,576.4 2028.4,580.4 2028.9,563.4 2029.4,559.0 2029.9,567.1 2030.4,566.4 2030.9,563.0 2031.4,551.1 2031.9,547.8 2032.0,553.4 2032.4,564.4 2032.9,545.8 2033.4,563.1 2033.9,578.5 2034.4,568.1 2034.4,584.7 2034.9,593.9 2035.4,570.3 2035.9,565.2 2036.4,576.1 2036.8,563.4 2036.9,565.3 2037.4,577.3 2037.9,571.9 2038.4,589.4 2038.9,592.0 2039.4,605.7 2039.9,611.3 2040.4,614.3 2040.9,626.8 2041.0,625.0 2041.4,624.7 2041.9,614.9 2042.4,611.0 2042.9,590.0 2043.4,587.9 2043.9,588.7 2043.9,584.7 2044.4,581.9 2044.9,585.4 2045.4,587.5 2045.9,601.3 2046.4,604.7 2046.9,607.5 2047.4,609.3 2047.4,603.7 2047.9,605.5 2048.4,593.8 2048.9,602.4 2049.4,587.9 2049.9,593.4 2050.4,584.7 2050.9,591.8 2051.4,589.0 2051.9,571.2 2052.4,579.1 2052.9,580.7 2053.4,586.6 2053.4,572.9 2053.9,576.0 2054.4,572.4 2054.9,564.7 2055.4,562.9 2055.9,577.4 2056.4,569.1 2056.9,568.5 2057.4,575.7 2057.9,569.4 2058.1,570.5 2058.4,566.2 2058.9,555.8 2059.4,552.9 2059.9,541.0 2060.4,530.7 2060.5,534.9 2060.9,524.3 2061.4,514.8 2061.7,519.5 2061.9,520.2 2062.4,527.9 2062.9,525.8 2063.4,524.3 2063.9,520.8 2064.4,530.0 2064.9,539.9 2065.2,544.4 2065.4,533.6 2065.9,541.4 2066.4,531.2 2066.9,522.9 2067.4,503.8 2067.6,508.8 2067.9,500.0 2068.4,507.1 2068.9,512.4 2069.4,518.5 2069.9,526.9 2070.4,522.5 2070.9,538.3 2071.2,534.9 2071.4,537.4 2071.9,538.1 2072.4,526.1 2072.9,527.3 2073.4,523.4 2073.9,508.3 2074.4,514.7 2074.7,506.4 2074.9,500.2 2075.4,486.6 2075.9,501.7 2076.4,509.4 2076.9,477.7 2077.4,470.2 2077.9,453.9 2078.3,456.6 2078.4,453.9 2078.9,464.2 2079.4,475.7 2079.9,480.3 2080.4,470.0 2080.7,475.6 2080.9,467.3 2081.4,464.7 2081.8,443.6 2081.9,445.6 2082.4,481.3 2082.9,495.1 2083.4,517.8 2083.7,531.3 2083.9,526.8 2084.4,513.1 2084.9,500.1 2085.4,489.3 2085.4,487.4 2085.9,483.0 2086.4,475.1 2086.9,474.2 2087.4,465.0 2087.8,447.1 2087.9,436.2 2088.4,456.2 2088.9,430.2 2089.4,449.3 2089.9,444.6 2090.4,424.3 2090.9,445.7 2091.4,431.0 2091.9,436.2 2092.0,425.4 2092.4,428.4 2092.9,410.2 2093.4,391.2 2093.9,396.5 2094.4,382.4 2094.9,384.7 2095.4,379.9 2095.7,366.0 2095.9,401.2 2096.4,337.7 2096.9,341.0 2097.4,343.9 2097.5,311.0 2097.9,305.9 2098.4,290.7 2098.9,325.1 2099.4,297.2 2099.9,303.9 2100.4,303.3 2100.9,314.9 2101.2,292.8 2101.4,273.6 2101.9,210.6 2102.4,134.8 2102.5,137.2 2102.9,126.6 2103.4,96.3 2103.9,102.7 2104.4,95.1 2104.9,113.9 2105.4,94.1 2105.7,82.3 2105.9,69.1 2106.4,55.9 2106.9,30.4 2107.4,63.0 2107.9,2.9 2108.4,19.7 2108.9,-8.2 2109.4,-15.6 2109.4,0.0 2109.9,24.6 2110.4,27.1 2110.9,98.0 2111.2,86.9 2111.4,123.4 2111.9,182.8 2112.4,342.5 2112.6,329.4 2112.9,284.4 2113.4,275.6 2113.9,203.1 2114.4,172.4 2114.9,126.0 2114.9,137.2 2115.4,171.7 2115.9,160.7 2116.4,215.1 2116.9,213.7 2117.4,217.7 2117.9,220.5 2118.4,263.3 2118.6,288.2 2118.9,271.0 2119.4,269.9 2119.9,237.9 2120.4,174.5 2120.9,191.9 2121.4,184.3 2121.9,150.8 2122.4,122.7 2122.9,87.8 2123.1,91.5 2123.4,86.5 2123.9,105.9 2124.4,162.7 2124.9,166.1 2125.4,215.9 2125.9,215.9 2126.3,247.0 2126.4,233.0 2126.9,220.9 2127.4,225.4 2127.9,196.6 2128.4,181.5 2128.6,183.0 2128.9,218.8 2129.4,275.9 2129.9,332.0 2130.4,349.6 2130.9,383.2 2130.9,393.4 2131.4,370.9 2131.9,354.4 2132.4,348.1 2132.9,318.9 2133.2,292.8 2133.4,273.9 2133.9,280.1 2134.4,310.4 2134.9,309.4 2135.4,275.7 2135.9,284.3 2136.4,305.8 2136.9,306.9 2137.4,280.8 2137.9,311.1 2138.4,272.3 2138.9,305.3 2139.4,284.8 2139.9,276.9 2140.1,288.2 2140.4,323.6 2140.9,338.8 2141.4,358.1 2141.9,390.4 2142.4,386.4 2142.9,424.8 2143.4,465.1 2143.9,479.0 2144.4,496.6 2144.6,512.4 2144.9,498.2 2145.4,450.2 2145.9,446.1 2146.4,427.0 2146.9,424.7 2146.9,411.7 2147.4,407.1 2147.9,385.9 2148.4,406.1 2148.9,387.4 2149.4,355.5 2149.9,373.9 2150.4,349.4 2150.9,347.0 2151.4,327.7 2151.9,347.1 2152.4,347.7 2152.9,317.5 2153.4,323.2 2153.9,297.5 2154.4,310.6 2154.8,294.7 2154.9,283.7 2155.4,264.1 2155.9,305.3 2156.4,329.8 2156.9,363.2 2157.4,337.8 2157.9,360.4 2158.4,372.6 2158.7,386.6 2158.9,397.3 2159.4,379.2 2159.9,374.6 2160.4,372.0 2160.9,343.6 2161.4,343.8 2161.9,355.8 2162.4,348.9 2162.9,312.4 2163.4,309.1 2163.9,326.6 2164.4,299.0 2164.9,290.9 2165.3,298.6 2165.4,316.3 2165.9,307.3 2166.4,368.2 2166.6,360.3 2166.9,374.0 2167.4,357.9 2167.9,370.3 2168.4,372.9 2168.9,403.3 2169.4,368.4 2169.9,406.1 2170.4,407.7 2170.5,420.7 2170.9,421.5 2171.4,416.6 2171.9,444.9 2172.4,440.2 2172.9,445.3 2173.4,464.0 2173.9,446.8 2174.4,473.8 2174.5,462.8 2174.9,462.5 2175.4,409.4 2175.9,437.1 2176.4,423.1 2176.9,391.9 2177.1,394.5 2177.4,426.6 2177.9,403.6 2178.4,426.7 2178.9,431.3 2179.4,441.2 2179.9,404.5 2180.4,456.0 2180.9,459.8 2181.4,485.0 2181.9,474.5 2182.4,483.2 2182.9,486.8 2183.4,482.4 2183.7,494.3 2183.9,504.6 2184.4,492.5 2184.9,499.8 2185.4,483.2 2185.9,497.4 2186.4,492.7 2186.9,481.9 2187.4,490.3 2187.9,491.5 2188.4,471.4 2188.9,474.2 2188.9,481.2 2189.4,466.3 2189.9,473.3 2190.4,479.9 2190.9,467.9 2191.4,471.0 2191.9,449.3 2192.4,446.2 2192.9,434.4 2193.4,426.9 2193.9,428.8 2194.2,433.9 2194.4,424.7 2194.9,434.2 2195.4,433.5 2195.9,407.1 2196.4,429.7 2196.9,411.0 2197.4,419.5 2197.9,385.3 2198.4,405.9 2198.9,391.2 2199.4,359.6 2199.9,379.8 2200.4,386.2 2200.8,373.5 2200.9,358.3 2201.4,354.8 2201.9,383.7 2202.4,366.8 2202.9,378.0 2203.4,371.9 2203.9,376.9 2204.4,351.0 2204.9,385.5 2205.4,350.9 2205.9,345.2 2206.4,367.2 2206.9,365.9 2207.4,364.9 2207.9,381.9 2208.4,382.7 2208.6,364.3 2208.9,365.9 2209.4,385.8 2209.9,367.8 2210.4,406.5 2210.9,373.0 2211.4,382.5 2211.9,391.5 2212.4,400.3 2212.6,397.1 2212.9,404.6 2213.4,414.8 2213.9,395.7 2214.4,405.6 2214.9,405.0 2215.4,419.3 2215.9,406.2 2216.4,420.9 2216.9,417.8 2217.4,429.5 2217.9,419.2 2218.4,429.9 2218.9,423.6 2219.4,417.8 2219.9,445.5 2220.4,444.9 2220.9,434.9 2221.2,448.5 2221.4,442.3 2221.9,456.3 2222.4,460.8 2222.5,464.6 2222.9,452.9 2223.4,464.1 2223.9,479.3 2224.4,459.2 2224.9,478.4 2225.4,465.1 2225.4,472.2 2225.9,456.4 2226.4,462.6 2226.9,453.3 2227.4,467.2 2227.9,453.4 2228.4,460.5 2228.9,455.4 2229.4,450.5 2229.7,446.8 2229.9,441.1 2230.4,450.1 2230.9,460.4 2231.4,447.5 2231.9,462.6 2232.4,457.5 2232.9,455.2 2233.4,448.1 2233.9,463.2 2233.9,457.0 2234.4,476.7 2234.7,479.8 2234.9,490.0 2235.4,485.0 2235.9,493.1 2236.4,483.9 2236.4,507.8 2236.9,503.5 2237.4,500.9 2237.9,510.1 2238.4,508.5 2238.9,508.1 2239.4,506.4 2239.8,495.1 2239.9,499.8 2240.4,507.3 2240.9,509.7 2241.4,514.4 2241.9,503.4 2242.4,514.2 2242.4,514.6 2242.9,504.7 2243.4,507.7 2243.9,519.6 2244.4,517.8 2244.9,520.5 2245.4,512.7 2245.9,512.3 2246.4,514.0 2246.9,517.7 2247.4,507.6 2247.9,521.2 2248.4,525.8 2248.9,509.7 2249.2,518.8 2249.4,529.3 2249.9,518.2 2250.4,507.1 2250.4,529.4 2250.8,499.3 2250.9,505.8 2251.4,509.5 2251.9,490.5 2252.4,506.0 2252.9,475.5 2253.4,514.5 2253.9,503.4 2254.4,514.4 2254.9,495.7 2255.4,497.3 2255.9,501.4 2256.4,529.5 2256.9,527.2 2257.4,513.7 2257.6,509.5 2257.9,499.9 2258.4,506.1 2258.9,492.5 2259.4,481.2 2259.9,460.2 2260.2,465.4 2260.4,456.3 2260.9,474.9 2261.4,466.0 2261.9,448.6 2262.4,466.4 2262.9,456.5 2263.4,470.7 2263.9,439.7 2264.4,446.7 2264.4,451.0 2264.9,456.9 2265.4,445.1 2265.9,453.4 2266.1,440.0 2266.4,437.0 2266.9,440.0 2267.4,440.3 2267.9,431.7 2268.4,459.0 2268.9,454.7 2269.4,456.0 2269.9,440.8 2270.4,456.2 2270.9,437.4 2271.4,444.2 2271.9,454.2 2272.0,457.0 2272.4,449.6 2272.9,450.5 2273.4,478.8 2273.9,453.5 2274.4,471.0 2274.6,475.6 2274.9,480.0 2275.4,478.6 2275.9,500.5 2276.4,485.4 2276.9,504.2 2277.4,512.0 2277.9,497.1 2278.0,512.0 2278.4,506.8 2278.9,518.6 2279.4,511.0 2279.9,517.5 2280.4,534.2 2280.9,524.1 2281.4,506.3 2281.4,516.3 2281.9,506.6 2282.4,514.5 2282.9,512.7 2283.4,498.5 2283.9,495.3 2284.4,493.5 2284.7,495.1 2284.9,508.5 2285.4,496.2 2285.9,483.5 2286.4,505.5 2286.9,494.8 2287.4,484.9 2287.9,486.8 2288.4,489.1 2288.9,490.8 2289.4,474.9 2289.9,480.7 2290.4,486.0 2290.9,476.2 2291.4,476.3 2291.5,470.5 2291.9,475.3 2292.4,471.2 2292.9,464.5 2293.4,465.8 2293.9,476.5 2294.0,477.3" fill="none" stroke="#000" stroke-width="1" shape-rendering="crispEdges"/>
<polyline points="1286.7,960.8 1286.7,960.3 1288.2,959.0 1289.7,956.1 1291.2,950.4 1292.7,951.8 1293.4,948.6 1294.2,951.8 1295.7,932.2 1295.7,936.3 1297.2,941.9 1297.9,946.4 1298.7,949.4 1300.2,948.3 1301.7,950.5 1302.4,953.1 1303.2,946.3 1304.7,946.2 1304.7,947.5 1306.2,949.1 1307.7,949.5 1309.2,948.3 1310.7,949.4 1312.2,949.6 1313.6,947.5 1313.7,946.8 1315.2,948.4 1316.7,950.3 1318.2,958.7 1319.7,956.1 1321.2,959.8 1321.5,959.4 1322.7,957.0 1324.2,953.2 1324.8,953.1 1325.7,955.2 1327.2,953.0 1328.7,953.3 1330.2,955.4 1331.7,955.0 1332.7,954.2 1333.2,950.6 1333.8,963.2 1334.7,963.7 1336.2,958.6 1337.2,957.6 1337.7,969.1 1339.2,971.9 1340.5,984.5 1340.7,981.8 1342.2,977.4 1343.7,969.4 1345.0,964.3 1345.2,963.9 1346.7,958.4 1348.2,952.9 1349.5,950.9 1349.7,952.4 1351.2,960.8 1352.7,962.8 1352.8,962.1 1354.2,959.9 1355.7,958.2 1357.2,959.2 1358.4,957.6 1358.7,956.1 1360.2,955.2 1361.7,947.8 1362.9,946.4 1363.2,946.9 1364.7,956.8 1365.2,953.1 1366.2,951.4 1367.7,950.9 1369.2,946.9 1370.7,945.8 1372.2,941.6 1373.7,938.7 1374.1,939.7 1375.2,941.2 1376.7,938.7 1378.2,943.3 1379.7,936.5 1379.7,936.3 1381.2,935.9 1382.7,938.7 1384.2,938.8 1385.3,941.9 1385.7,943.3 1387.2,948.9 1387.6,948.6 1388.7,951.5 1390.2,952.6 1391.7,950.3 1392.1,952.0 1393.2,951.2 1394.7,949.7 1396.2,948.6 1397.7,949.4 1397.7,948.6 1399.2,949.6 1400.7,954.6 1402.2,956.5 1403.7,958.3 1404.4,957.6 1405.2,956.6 1406.7,955.0 1408.2,954.6 1409.7,956.8 1411.2,952.7 1412.7,953.5 1414.2,955.2 1414.5,953.1 1415.7,954.0 1417.2,951.1 1418.7,948.6 1420.2,947.0 1421.2,947.5 1421.7,948.0 1423.2,948.6 1424.7,948.5 1426.2,949.6 1427.7,941.6 1429.2,947.7 1430.7,946.8 1432.2,945.6 1432.4,947.5 1433.7,949.3 1435.2,948.7 1436.7,952.0 1438.2,952.2 1439.1,952.0 1439.7,953.6 1441.2,949.6 1442.7,949.5 1444.2,947.5 1445.7,945.7 1447.2,946.6 1448.7,945.1 1450.2,943.7 1450.3,944.1 1451.7,942.4 1453.2,941.6 1454.7,943.7 1456.2,941.9 1457.7,942.5 1459.2,943.6 1459.3,941.9 1460.7,939.7 1462.2,937.9 1463.7,936.8 1465.2,935.4 1466.7,932.2 1468.2,928.9 1468.3,929.6 1469.7,934.6 1470.5,940.8 1471.2,939.9 1472.7,945.5 1474.2,938.3 1475.7,939.7 1477.2,940.2 1478.7,944.9 1479.5,939.7 1480.2,938.6 1481.7,940.2 1483.2,942.0 1484.7,943.6 1486.2,942.4 1486.2,944.1 1487.7,944.7 1489.2,946.4 1490.7,948.8 1492.2,949.6 1492.9,950.9 1493.7,958.4 1495.2,950.6 1496.7,958.4 1498.2,960.0 1499.7,962.7 1499.7,962.1 1501.2,961.2 1502.7,956.2 1504.1,954.2 1504.2,952.8 1505.7,946.1 1507.2,951.4 1508.7,951.7 1509.7,949.7 1510.2,948.3 1511.7,950.7 1513.2,950.4 1514.7,952.1 1515.3,952.0 1516.2,949.7 1517.7,952.5 1519.2,958.4 1520.7,952.1 1522.2,947.3 1523.7,947.5 1525.2,950.1 1526.7,945.9 1528.2,948.8 1529.7,946.9 1531.2,944.3 1532.7,952.2 1534.2,943.6 1535.5,944.1 1535.7,942.2 1537.2,937.3 1538.7,941.6 1540.2,941.7 1541.7,936.5 1543.2,935.6 1544.7,935.7 1546.2,934.6 1547.7,931.9 1547.8,932.9 1549.2,923.5 1550.7,915.8 1551.2,912.8 1552.2,915.5 1553.5,921.7 1553.7,923.9 1555.2,932.2 1556.7,937.8 1557.9,946.4 1558.2,943.7 1559.7,941.6 1560.2,939.7 1561.2,942.1 1562.7,940.9 1564.2,940.8 1565.7,942.1 1565.8,944.1 1567.2,943.9 1568.7,946.8 1570.2,935.5 1571.4,935.2 1571.7,934.2 1573.2,932.1 1574.7,930.3 1576.2,927.4 1577.7,927.7 1579.2,924.8 1579.2,925.1 1580.7,927.7 1582.2,930.4 1583.7,927.8 1585.2,933.7 1586.7,939.5 1588.2,939.4 1589.3,941.9 1589.7,940.9 1591.2,943.3 1592.7,940.9 1594.2,948.2 1595.7,940.2 1597.2,938.3 1598.3,939.7 1598.7,941.7 1600.2,941.8 1601.7,946.4 1603.2,943.6 1604.7,953.4 1605.0,954.2 1606.2,952.3 1607.7,952.8 1609.2,954.4 1610.7,946.5 1612.2,953.3 1613.7,953.4 1615.2,950.8 1616.2,952.0 1616.7,949.6 1618.2,950.0 1619.7,947.4 1621.2,945.4 1622.7,947.1 1624.2,944.5 1625.7,944.1 1627.2,939.9 1628.7,942.1 1629.7,939.7 1630.2,942.1 1631.7,940.5 1633.2,941.4 1634.7,945.5 1636.2,946.2 1637.7,945.7 1638.6,948.6 1639.2,948.3 1640.7,950.0 1642.2,946.9 1643.7,948.7 1645.2,946.8 1646.7,941.4 1648.2,949.2 1649.7,945.4 1651.2,947.3 1652.7,946.7 1654.2,948.1 1655.7,946.1 1657.2,948.2 1658.7,944.9 1660.2,944.7 1661.0,946.4 1661.7,947.5 1663.2,938.7 1664.7,946.2 1666.2,945.0 1667.7,943.6 1669.2,943.9 1670.7,944.1 1672.2,939.9 1673.7,940.6 1674.5,940.8 1675.2,938.8 1676.7,943.5 1678.2,940.0 1679.7,943.4 1681.2,948.1 1682.7,944.9 1684.2,939.5 1685.7,944.5 1687.2,943.0 1688.7,941.3 1690.2,944.4 1691.7,948.1 1693.2,947.5 1694.7,947.2 1694.7,947.5 1696.2,936.0 1697.7,936.6 1699.1,934.1 1699.2,932.7 1700.7,933.9 1702.2,939.9 1703.7,932.9 1705.2,928.0 1706.7,936.2 1708.1,934.1 1708.2,931.9 1709.7,923.2 1711.2,921.3 1712.6,915.0 1712.7,916.9 1714.2,916.9 1715.7,919.8 1716.0,921.7 1717.2,933.3 1718.2,944.1 1718.7,942.2 1720.2,939.8 1721.7,940.0 1723.2,936.7 1723.8,935.2 1724.7,934.1 1726.2,931.0 1727.7,938.5 1729.2,940.1 1730.7,940.2 1732.2,939.8 1733.7,939.0 1735.2,934.4 1736.7,940.4 1738.2,943.8 1739.7,944.2 1741.2,945.9 1741.7,945.3 1742.7,946.8 1744.2,947.8 1745.7,944.3 1746.2,946.4 1747.2,960.3 1747.3,962.1 1748.7,955.8 1750.2,952.2 1750.7,952.0 1751.7,949.6 1753.2,951.6 1754.7,952.5 1756.2,945.8 1757.7,950.6 1759.2,951.0 1760.7,949.3 1762.2,949.0 1763.7,946.1 1765.2,948.6 1766.7,948.4 1768.2,951.3 1769.7,946.4 1771.2,943.5 1772.7,943.5 1773.1,944.1 1774.2,946.0 1775.7,945.9 1777.2,950.9 1778.7,945.2 1780.2,948.5 1781.7,947.9 1782.1,947.5 1783.2,953.0 1784.7,946.9 1786.2,948.8 1787.7,945.8 1789.2,948.7 1790.7,940.7 1792.2,953.2 1793.7,944.1 1795.2,947.4 1796.7,944.9 1798.2,946.2 1799.7,944.1 1800.0,945.3 1801.2,946.8 1802.7,943.5 1804.2,939.8 1804.5,945.3 1805.7,945.4 1807.2,942.6 1808.7,942.8 1810.2,942.0 1811.7,939.3 1813.2,939.2 1813.4,937.4 1814.7,941.3 1815.7,941.9 1816.2,941.0 1817.7,943.1 1819.2,942.2 1820.7,942.6 1822.2,938.1 1823.7,942.0 1824.7,939.7 1825.2,937.6 1826.7,939.5 1828.2,940.5 1829.7,948.9 1831.2,942.4 1832.7,941.0 1833.6,941.9 1834.2,943.7 1835.7,936.7 1837.2,941.2 1838.7,949.8 1840.2,940.9 1841.7,940.3 1843.2,942.1 1844.7,940.5 1846.2,943.5 1847.7,941.7 1848.2,941.9 1849.2,935.0 1850.4,930.7 1850.7,928.8 1852.2,926.6 1853.7,929.0 1855.2,923.5 1856.7,922.3 1858.2,919.8 1859.4,920.6 1859.7,929.0 1860.5,944.1 1861.2,947.0 1862.7,946.4 1864.2,952.7 1865.0,953.1 1865.7,953.1 1867.2,948.9 1868.7,945.2 1869.5,943.0 1870.2,942.6 1871.7,944.1 1873.2,942.2 1874.7,940.2 1876.2,940.7 1877.7,941.1 1878.4,941.9 1879.2,945.6 1880.7,938.1 1882.2,936.1 1882.9,935.2 1883.7,936.9 1885.2,936.5 1886.7,937.9 1888.2,943.3 1888.5,941.9 1889.7,948.6 1891.2,939.7 1892.7,936.6 1894.2,929.0 1895.7,932.9 1897.2,933.9 1898.7,930.5 1900.2,932.0 1900.9,929.6 1901.7,932.5 1903.2,935.4 1904.7,941.3 1905.3,944.1 1906.2,946.1 1907.7,950.5 1909.2,944.9 1910.7,953.2 1912.1,957.6 1912.2,951.9 1913.7,958.0 1915.2,954.2 1916.6,958.7 1916.7,957.9 1918.2,952.6 1919.7,950.7 1921.2,949.0 1922.7,943.5 1923.3,941.9 1924.2,943.7 1925.7,943.7 1927.2,939.9 1928.7,939.3 1930.2,942.0 1931.7,940.2 1933.2,939.6 1934.7,941.8 1936.2,939.4 1937.7,940.2 1939.0,939.7 1939.2,934.9 1940.7,938.5 1942.2,933.6 1943.7,931.7 1945.2,927.6 1945.7,928.4 1946.7,925.3 1948.2,924.4 1949.7,925.3 1951.2,924.6 1952.4,921.7 1952.7,922.5 1954.2,917.8 1955.7,913.3 1957.2,910.3 1958.7,907.4 1959.1,906.0 1960.2,921.2 1961.4,928.4 1961.7,928.5 1963.2,923.8 1964.7,912.2 1966.2,920.0 1967.7,910.6 1968.1,909.4 1969.2,912.3 1970.7,913.4 1972.2,914.1 1972.6,915.0 1973.7,925.4 1974.8,936.3 1975.2,938.3 1976.7,938.6 1978.2,938.6 1979.7,942.3 1981.2,942.1 1981.6,941.9 1982.7,940.6 1984.2,943.2 1985.7,943.0 1987.2,941.9 1988.7,942.2 1990.2,945.9 1990.5,944.1 1991.7,945.2 1993.2,951.6 1994.7,957.4 1996.2,958.3 1997.2,962.1 1997.7,957.9 1999.2,943.5 2000.6,931.8 2000.7,930.5 2002.2,934.4 2003.7,933.8 2005.2,933.0 2006.7,931.4 2008.2,937.4 2009.7,942.5 2010.7,938.5 2011.2,935.9 2012.7,929.3 2014.2,927.1 2015.7,918.9 2017.2,916.4 2018.5,909.4 2018.7,902.3 2020.2,916.1 2021.7,923.9 2023.2,924.1 2024.1,927.3 2024.7,927.0 2026.2,926.4 2027.7,928.7 2029.2,918.8 2030.7,924.0 2030.9,921.7 2032.2,926.1 2033.7,931.9 2035.2,936.7 2035.3,937.4 2036.7,943.0 2038.2,948.3 2039.7,956.5 2041.0,959.8 2041.2,960.9 2042.7,962.3 2044.2,954.9 2045.7,952.9 2046.6,950.9 2047.2,948.4 2048.7,947.2 2050.2,939.1 2051.7,944.4 2053.2,939.6 2053.3,939.7 2054.7,935.4 2056.2,934.1 2057.7,929.6 2059.2,927.6 2060.7,922.0 2062.2,920.1 2062.2,919.5 2063.7,922.1 2065.2,930.9 2066.7,926.8 2068.2,931.1 2069.7,930.9 2071.2,932.5 2071.2,934.1 2072.7,930.5 2074.2,925.9 2075.7,925.4 2077.2,918.8 2077.9,919.5 2078.7,922.5 2080.2,931.3 2081.7,939.2 2083.2,944.3 2083.5,946.4 2084.7,937.7 2086.2,927.3 2086.9,921.7 2087.7,919.4 2089.2,917.2 2090.7,919.1 2092.2,914.4 2093.6,915.0 2093.7,910.2 2095.2,912.0 2096.7,912.6 2098.2,908.6 2099.7,910.5 2100.3,908.3 2101.2,881.6 2101.5,870.2 2102.7,884.9 2104.2,889.5 2104.8,894.8 2105.7,892.9 2107.2,892.4 2108.7,895.1 2109.3,888.1 2110.2,899.0 2111.7,922.7 2112.7,937.4 2113.2,937.0 2114.7,943.1 2116.2,944.3 2117.7,945.5 2118.3,948.6 2119.2,945.0 2120.7,936.5 2122.2,929.6 2122.8,926.2 2123.7,931.6 2125.2,937.2 2126.7,943.0 2128.2,950.3 2129.7,956.1 2130.6,959.8 2131.2,958.0 2132.7,951.7 2134.2,957.3 2135.7,958.9 2137.2,956.9 2138.5,955.3 2138.7,955.6 2140.2,967.4 2141.7,965.3 2143.2,973.3 2144.7,975.3 2145.2,978.9 2146.2,974.6 2147.7,970.6 2149.2,963.5 2150.7,958.4 2152.2,950.2 2153.7,946.6 2154.1,944.1 2155.2,944.6 2156.7,952.0 2158.2,953.9 2158.6,954.2 2159.7,951.5 2161.2,949.0 2162.7,945.4 2164.2,943.9 2164.2,941.9 2165.7,948.0 2167.2,953.8 2168.7,958.6 2168.7,957.6 2170.2,958.8 2171.7,962.2 2173.2,960.7 2174.7,961.5 2176.2,965.5 2177.7,967.1 2179.2,965.8 2180.7,972.6 2181.0,967.7 2182.2,971.9 2183.7,966.9 2185.2,963.6 2186.7,964.1 2188.2,965.3 2189.7,962.0 2191.1,962.1 2191.2,960.2 2192.7,956.4 2194.2,956.3 2195.7,948.8 2197.2,947.0 2198.7,942.0 2200.2,932.3 2201.2,937.4 2201.7,939.0 2203.2,936.0 2204.7,937.9 2206.2,939.2 2207.7,941.2 2209.2,943.8 2210.2,939.7 2210.7,942.0 2212.2,943.4 2213.7,937.1 2215.2,946.0 2216.7,950.6 2218.2,956.7 2219.7,951.8 2221.2,957.2 2222.7,955.5 2223.6,958.7 2224.2,956.2 2225.7,956.8 2227.2,949.1 2228.7,950.6 2230.2,951.9 2231.7,951.7 2232.6,952.0 2233.2,951.4 2234.7,955.7 2236.2,961.8 2237.1,963.2 2237.7,964.6 2239.2,963.1 2240.7,960.7 2242.2,960.9 2243.7,959.5 2245.2,960.2 2246.7,962.2 2248.2,959.3 2248.3,959.8 2249.7,960.1 2251.2,957.0 2252.7,953.8 2254.2,950.5 2255.0,950.9 2255.7,951.8 2257.2,946.5 2258.7,945.1 2260.2,942.9 2261.7,938.8 2263.2,939.3 2264.7,936.3 2266.2,934.1 2266.2,934.1 2267.7,938.5 2269.2,939.7 2270.7,942.1 2272.2,944.7 2273.7,948.8 2275.2,951.0 2276.7,958.3 2277.4,957.6 2278.2,955.7 2279.7,953.7 2281.2,953.3 2282.7,952.6 2284.2,959.4 2285.7,950.0 2287.2,945.0 2288.7,950.8 2290.2,948.7 2291.7,940.9 2293.1,945.3" fill="none" stroke="#000" stroke-width="1" shape-rendering="crispEdges"/>
<line x1="1287.5" y1="1018" x2="1287.5" y2="1029" stroke="#000" stroke-width="1.3"/><line x1="1309.4" y1="1018" x2="1309.4" y2="1029" stroke="#000" stroke-width="1.3"/><line x1="1331.3" y1="1018" x2="1331.3" y2="1047" stroke="#ff0000" stroke-width="1.3"/><line x1="1353.2" y1="1018" x2="1353.2" y2="1029" stroke="#000" stroke-width="1.3"/><line x1="1375.1" y1="1018" x2="1375.1" y2="1029" stroke="#000" stroke-width="1.3"/><line x1="1397.0" y1="1018" x2="1397.0" y2="1029" stroke="#000" stroke-width="1.3"/><line x1="1419.0" y1="1018" x2="1419.0" y2="1029" stroke="#000" stroke-width="1.3"/><line x1="1440.9" y1="1018" x2="1440.9" y2="1029" stroke="#000" stroke-width="1.3"/><line x1="1462.8" y1="1018" x2="1462.8" y2="1029" stroke="#000" stroke-width="1.3"/><line x1="1484.7" y1="1018" x2="1484.7" y2="1029" stroke="#000" stroke-width="1.3"/><line x1="1506.6" y1="1018" x2="1506.6" y2="1029" stroke="#000" stroke-width="1.3"/><line x1="1528.5" y1="1018" x2="1528.5" y2="1029" stroke="#000" stroke-width="1.3"/><line x1="1550.5" y1="1018" x2="1550.5" y2="1029" stroke="#000" stroke-width="1.3"/><line x1="1572.4" y1="1018" x2="1572.4" y2="1029" stroke="#000" stroke-width="1.3"/><line x1="1594.3" y1="1018" x2="1594.3" y2="1047" stroke="#ff0000" stroke-width="1.3"/><line x1="1616.2" y1="1018" x2="1616.2" y2="1029" stroke="#000" stroke-width="1.3"/><line x1="1638.1" y1="1018" x2="1638.1" y2="1029" stroke="#000" stroke-width="1.3"/><line x1="1660.0" y1="1018" x2="1660.0" y2="1029" stroke="#000" stroke-width="1.3"/><line x1="1682.0" y1="1018" x2="1682.0" y2="1029" stroke="#000" stroke-width="1.3"/><line x1="1703.9" y1="1018" x2="1703.9" y2="1029" stroke="#000" stroke-width="1.3"/><line x1="1725.8" y1="1018" x2="1725.8" y2="1029" stroke="#000" stroke-width="1.3"/><line x1="1747.7" y1="1018" x2="1747.7" y2="1029" stroke="#000" stroke-width="1.3"/><line x1="1769.6" y1="1018" x2="1769.6" y2="1029" stroke="#000" stroke-width="1.3"/><line x1="1791.5" y1="1018" x2="1791.5" y2="1029" stroke="#000" stroke-width="1.3"/><line x1="1813.5" y1="1018" x2="1813.5" y2="1029" stroke="#000" stroke-width="1.3"/><line x1="1835.4" y1="1018" x2="1835.4" y2="1029" stroke="#000" stroke-width="1.3"/><line x1="1857.3" y1="1018" x2="1857.3" y2="1047" stroke="#ff0000" stroke-width="1.3"/><line x1="1879.2" y1="1018" x2="1879.2" y2="1029" stroke="#000" stroke-width="1.3"/><line x1="1901.1" y1="1018" x2="1901.1" y2="1029" stroke="#000" stroke-width="1.3"/><line x1="1923.0" y1="1018" x2="1923.0" y2="1029" stroke="#000" stroke-width="1.3"/><line x1="1945.0" y1="1018" x2="1945.0" y2="1029" stroke="#000" stroke-width="1.3"/><line x1="1966.9" y1="1018" x2="1966.9" y2="1029" stroke="#000" stroke-width="1.3"/><line x1="1988.8" y1="1018" x2="1988.8" y2="1029" stroke="#000" stroke-width="1.3"/><line x1="2010.7" y1="1018" x2="2010.7" y2="1029" stroke="#000" stroke-width="1.3"/><line x1="2032.6" y1="1018" x2="2032.6" y2="1029" stroke="#000" stroke-width="1.3"/><line x1="2054.6" y1="1018" x2="2054.6" y2="1029" stroke="#000" stroke-width="1.3"/><line x1="2076.5" y1="1018" x2="2076.5" y2="1029" stroke="#000" stroke-width="1.3"/><line x1="2098.4" y1="1018" x2="2098.4" y2="1029" stroke="#000" stroke-width="1.3"/><line x1="2120.3" y1="1018" x2="2120.3" y2="1047" stroke="#ff0000" stroke-width="1.3"/><line x1="2142.2" y1="1018" x2="2142.2" y2="1029" stroke="#000" stroke-width="1.3"/><line x1="2164.1" y1="1018" x2="2164.1" y2="1029" stroke="#000" stroke-width="1.3"/><line x1="2186.1" y1="1018" x2="2186.1" y2="1029" stroke="#000" stroke-width="1.3"/><line x1="2208.0" y1="1018" x2="2208.0" y2="1029" stroke="#000" stroke-width="1.3"/><line x1="2229.9" y1="1018" x2="2229.9" y2="1029" stroke="#000" stroke-width="1.3"/><line x1="2251.8" y1="1018" x2="2251.8" y2="1029" stroke="#000" stroke-width="1.3"/><line x1="2273.7" y1="1018" x2="2273.7" y2="1029" stroke="#000" stroke-width="1.3"/><line x1="2295.6" y1="1018" x2="2295.6" y2="1029" stroke="#000" stroke-width="1.3"/><line x1="2317.6" y1="1018" x2="2317.6" y2="1029" stroke="#000" stroke-width="1.3"/>
<text x="0" y="0" transform="translate(264.8,1100.5) rotate(-54.5)" text-anchor="middle" dominant-baseline="central" letter-spacing="2" font-size="35.5" fill="#454a52">2011</text><text x="0" y="0" transform="translate(527.8,1100.5) rotate(-54.5)" text-anchor="middle" dominant-baseline="central" letter-spacing="2" font-size="35.5" fill="#454a52">2012</text><text x="0" y="0" transform="translate(790.8,1100.5) rotate(-54.5)" text-anchor="middle" dominant-baseline="central" letter-spacing="2" font-size="35.5" fill="#454a52">2013</text><text x="0" y="0" transform="translate(1053.8,1100.5) rotate(-54.5)" text-anchor="middle" dominant-baseline="central" letter-spacing="2" font-size="35.5" fill="#454a52">2014</text><text x="0" y="0" transform="translate(1316.8,1100.5) rotate(-54.5)" text-anchor="middle" dominant-baseline="central" letter-spacing="2" font-size="35.5" fill="#454a52">2015</text><text x="0" y="0" transform="translate(1579.8,1100.5) rotate(-54.5)" text-anchor="middle" dominant-baseline="central" letter-spacing="2" font-size="35.5" fill="#454a52">2016</text><text x="0" y="0" transform="translate(1842.8,1100.5) rotate(-54.5)" text-anchor="middle" dominant-baseline="central" letter-spacing="2" font-size="35.5" fill="#454a52">2017</text><text x="0" y="0" transform="translate(2105.8,1100.5) rotate(-54.5)" text-anchor="middle" dominant-baseline="central" letter-spacing="2" font-size="35.5" fill="#454a52">2018</text>
</svg>

<!-- shadows -->
<div class="a" style="left:-40px;top:-40px;width:1327px;height:1114px;box-shadow:2px 8px 16px 0px rgba(0,0,0,0.26);background:#fff"></div>

<!-- left window -->
<div id="lwin" class="a">
  <div class="a" style="left:0;top:0;width:951px;height:6px;background:#f0f0f0"></div>
  <div class="a" style="left:7px;top:-2px;width:71px;height:7px;background:#e1e1e1;border:1px solid #adadad"></div>
  <div class="a" style="left:80px;top:-2px;width:72px;height:7px;background:#e1e1e1;border:1px solid #adadad"></div>
  <div class="a" style="left:154px;top:-2px;width:72px;height:7px;background:#e1e1e1;border:1px solid #adadad"></div>
  <div class="a" style="left:228px;top:-2px;width:72px;height:7px;background:#e1e1e1;border:1px solid #adadad"></div>
  <div class="a" style="left:302px;top:-2px;width:70px;height:7px;background:#e1e1e1;border:1px solid #adadad"></div>
  <div class="a" style="left:0;top:5px;width:951px;height:1px;background:#a0a0a0"></div>
  <div class="a" style="left:1px;top:6px;width:307px;height:46px;background:#6666ff"></div>
  <div class="a" style="left:308px;top:6px;width:237px;height:46px;background:#ff0000"></div>
  <div class="a" style="left:545px;top:6px;width:237px;height:46px;background:#ff6666"></div>
  <div class="a" style="left:782px;top:6px;width:169px;height:46px;background:#ff9999"></div>
  <div class="a" style="left:71px;top:7px;width:2px;height:45px;background:#000"></div>
  <div class="a" style="left:544px;top:7px;width:2px;height:45px;background:#000"></div>
  <div class="a" style="left:781px;top:7px;width:2px;height:45px;background:#000"></div>
  <div class="t" style="left:311px;top:8px;font-size:21.5px;letter-spacing:0.2px">1005.72 d</div>
  <div class="a" style="left:1px;top:58px;width:950px;height:1px;background:#000"></div>
  <svg width="951" height="1071" viewBox="0 0 951 1071">
  <defs><linearGradient id="g0"><stop offset="0.000" stop-color="#ff4000"/><stop offset="0.749" stop-color="#ff1600"/><stop offset="1.000" stop-color="#ff0000"/></linearGradient><linearGradient id="g1"><stop offset="0.000" stop-color="#ff3300"/><stop offset="0.730" stop-color="#f90006"/><stop offset="1.000" stop-color="#d90026"/></linearGradient><linearGradient id="g2"><stop offset="0.000" stop-color="#ff4000"/><stop offset="0.636" stop-color="#f90006"/><stop offset="1.000" stop-color="#990066"/></linearGradient><linearGradient id="g3"><stop offset="0.000" stop-color="#ff4000"/><stop offset="0.633" stop-color="#f90006"/><stop offset="1.000" stop-color="#8c0073"/></linearGradient><linearGradient id="g4"><stop offset="0.000" stop-color="#ff6600"/><stop offset="0.747" stop-color="#f90006"/><stop offset="1.000" stop-color="#cc0033"/></linearGradient><linearGradient id="g5"><stop offset="0.000" stop-color="#ff8000"/><stop offset="0.646" stop-color="#ff3f00"/><stop offset="1.000" stop-color="#ff0000"/></linearGradient><linearGradient id="g6"><stop offset="0.000" stop-color="#ffa600"/><stop offset="0.556" stop-color="#ff8100"/><stop offset="0.793" stop-color="#ff5800"/><stop offset="1.000" stop-color="#ff1a00"/></linearGradient><linearGradient id="g7"><stop offset="0.000" stop-color="#ffa600"/><stop offset="0.556" stop-color="#ff8100"/><stop offset="0.793" stop-color="#ff5800"/><stop offset="1.000" stop-color="#ff1a00"/></linearGradient><linearGradient id="g8"><stop offset="0.000" stop-color="#ff7300"/><stop offset="0.627" stop-color="#ff4200"/><stop offset="1.000" stop-color="#ff0000"/></linearGradient><linearGradient id="g9"><stop offset="0.000" stop-color="#ff0000"/><stop offset="0.749" stop-color="#d60029"/><stop offset="1.000" stop-color="#bf0040"/></linearGradient><linearGradient id="g10"><stop offset="0.000" stop-color="#bf0040"/><stop offset="0.369" stop-color="#7f0080"/><stop offset="0.626" stop-color="#3500ca"/><stop offset="1.000" stop-color="#660099"/></linearGradient><linearGradient id="g11"><stop offset="0.000" stop-color="#bf0040"/><stop offset="0.369" stop-color="#7f0080"/><stop offset="0.626" stop-color="#3500ca"/><stop offset="1.000" stop-color="#660099"/></linearGradient><linearGradient id="g12"><stop offset="0.000" stop-color="#ff0000"/><stop offset="0.663" stop-color="#da0025"/><stop offset="1.000" stop-color="#b3004c"/></linearGradient><linearGradient id="g13"><stop offset="0.000" stop-color="#ff4000"/><stop offset="0.611" stop-color="#f90006"/><stop offset="1.000" stop-color="#bf0040"/></linearGradient><linearGradient id="g14"><stop offset="0.000" stop-color="#ff3300"/><stop offset="0.470" stop-color="#f90006"/><stop offset="1.000" stop-color="#990066"/></linearGradient><linearGradient id="g15"><stop offset="0.000" stop-color="#ff3300"/><stop offset="0.290" stop-color="#f90006"/><stop offset="0.507" stop-color="#83007c"/><stop offset="0.761" stop-color="#3400cb"/><stop offset="1.000" stop-color="#4000bf"/></linearGradient><linearGradient id="g16"><stop offset="0.000" stop-color="#ff3300"/><stop offset="0.290" stop-color="#f90006"/><stop offset="0.507" stop-color="#83007c"/><stop offset="0.761" stop-color="#3400cb"/><stop offset="1.000" stop-color="#4000bf"/></linearGradient><linearGradient id="g17"><stop offset="0.000" stop-color="#ff3300"/><stop offset="0.309" stop-color="#ff1000"/><stop offset="0.421" stop-color="#f60009"/><stop offset="0.879" stop-color="#960069"/><stop offset="1.000" stop-color="#8c0073"/></linearGradient><linearGradient id="g18"><stop offset="0.000" stop-color="#ff2600"/><stop offset="0.354" stop-color="#ff0400"/><stop offset="0.560" stop-color="#cf0030"/><stop offset="1.000" stop-color="#80007f"/></linearGradient><linearGradient id="g19"><stop offset="0.000" stop-color="#ff0000"/><stop offset="0.184" stop-color="#f80007"/><stop offset="0.546" stop-color="#80007f"/><stop offset="0.724" stop-color="#61009e"/><stop offset="1.000" stop-color="#4d00b2"/></linearGradient><linearGradient id="g20"><stop offset="0.000" stop-color="#e60019"/><stop offset="0.193" stop-color="#df0020"/><stop offset="0.349" stop-color="#b3004c"/><stop offset="0.666" stop-color="#1500ea"/><stop offset="0.876" stop-color="#4300bc"/><stop offset="1.000" stop-color="#4c00b3"/></linearGradient><linearGradient id="g21"><stop offset="0.000" stop-color="#de0021"/><stop offset="0.181" stop-color="#e0001f"/><stop offset="0.579" stop-color="#6c0093"/><stop offset="0.740" stop-color="#5400ab"/><stop offset="1.000" stop-color="#4c00b2"/></linearGradient><linearGradient id="g22"><stop offset="0.000" stop-color="#de0021"/><stop offset="0.179" stop-color="#d70028"/><stop offset="0.456" stop-color="#5700a8"/><stop offset="0.529" stop-color="#3e00c1"/><stop offset="0.681" stop-color="#2a00d5"/><stop offset="1.000" stop-color="#5900a6"/></linearGradient><linearGradient id="g23"><stop offset="0.000" stop-color="#ff0000"/><stop offset="0.184" stop-color="#f80007"/><stop offset="0.359" stop-color="#bb0044"/><stop offset="0.521" stop-color="#6a0095"/><stop offset="0.680" stop-color="#4100be"/><stop offset="1.000" stop-color="#5900a6"/></linearGradient><linearGradient id="g24"><stop offset="0.000" stop-color="#ff3300"/><stop offset="0.179" stop-color="#ff4900"/><stop offset="0.509" stop-color="#f90006"/><stop offset="0.834" stop-color="#8c0073"/><stop offset="1.000" stop-color="#7a0085"/></linearGradient><linearGradient id="g25"><stop offset="0.000" stop-color="#ff6600"/><stop offset="0.176" stop-color="#ff9700"/><stop offset="0.340" stop-color="#ff7700"/><stop offset="0.537" stop-color="#ff0500"/><stop offset="0.850" stop-color="#7f0080"/><stop offset="1.000" stop-color="#7a0085"/></linearGradient><linearGradient id="g26"><stop offset="0.000" stop-color="#ff7300"/><stop offset="0.177" stop-color="#ffb200"/><stop offset="0.334" stop-color="#ffa400"/><stop offset="0.537" stop-color="#f90006"/><stop offset="0.683" stop-color="#73008c"/><stop offset="0.840" stop-color="#1600e9"/><stop offset="1.000" stop-color="#4500ba"/></linearGradient><linearGradient id="g27"><stop offset="0.000" stop-color="#ff8c00"/><stop offset="0.181" stop-color="#ffbe00"/><stop offset="0.336" stop-color="#ffb100"/><stop offset="0.620" stop-color="#f90006"/><stop offset="0.724" stop-color="#c5003a"/><stop offset="0.903" stop-color="#870078"/><stop offset="1.000" stop-color="#6e0091"/></linearGradient><linearGradient id="g28"><stop offset="0.000" stop-color="#ff3300"/><stop offset="0.207" stop-color="#ff7600"/><stop offset="0.341" stop-color="#ff8900"/><stop offset="0.504" stop-color="#ff5d00"/><stop offset="0.637" stop-color="#f90006"/><stop offset="0.729" stop-color="#ca0035"/><stop offset="0.921" stop-color="#85007a"/><stop offset="1.000" stop-color="#6e0091"/></linearGradient><linearGradient id="g29"><stop offset="0.000" stop-color="#ff0000"/><stop offset="0.309" stop-color="#ff2300"/><stop offset="0.506" stop-color="#ff0500"/><stop offset="0.727" stop-color="#91006e"/><stop offset="0.864" stop-color="#61009e"/><stop offset="1.000" stop-color="#4d00b2"/></linearGradient><linearGradient id="g30"><stop offset="0.000" stop-color="#ab0054"/><stop offset="0.207" stop-color="#1d00e2"/><stop offset="0.377" stop-color="#ff0100"/><stop offset="0.499" stop-color="#ff2300"/><stop offset="0.579" stop-color="#f80007"/><stop offset="0.739" stop-color="#990066"/><stop offset="0.846" stop-color="#5800a7"/><stop offset="1.000" stop-color="#4500ba"/></linearGradient><linearGradient id="g31"><stop offset="0.000" stop-color="#ff0000"/><stop offset="0.213" stop-color="#ff2a00"/><stop offset="0.503" stop-color="#ff4800"/><stop offset="0.696" stop-color="#f90006"/><stop offset="0.857" stop-color="#a5005a"/><stop offset="1.000" stop-color="#80007f"/></linearGradient><linearGradient id="g32"><stop offset="0.000" stop-color="#ff9900"/><stop offset="0.171" stop-color="#fff100"/><stop offset="0.371" stop-color="#ffe000"/><stop offset="0.496" stop-color="#ffe100"/><stop offset="0.679" stop-color="#ff1b00"/><stop offset="0.727" stop-color="#f70008"/><stop offset="0.854" stop-color="#a3005c"/><stop offset="1.000" stop-color="#6e0091"/></linearGradient><linearGradient id="g33"><stop offset="0.000" stop-color="#ffe500"/><stop offset="0.034" stop-color="#ffff07"/><stop offset="0.123" stop-color="#ffff68"/><stop offset="0.261" stop-color="#fffffe"/><stop offset="0.330" stop-color="#ffffeb"/><stop offset="0.410" stop-color="#ffff64"/><stop offset="0.486" stop-color="#fffa00"/><stop offset="0.573" stop-color="#ff7200"/><stop offset="0.616" stop-color="#ff0900"/><stop offset="0.644" stop-color="#ec0013"/><stop offset="0.840" stop-color="#660099"/><stop offset="1.000" stop-color="#5900a6"/></linearGradient><linearGradient id="g34"><stop offset="0.000" stop-color="#fff200"/><stop offset="0.026" stop-color="#ffff0b"/><stop offset="0.224" stop-color="#ffffce"/><stop offset="0.261" stop-color="#fffff1"/><stop offset="0.331" stop-color="#ffffd1"/><stop offset="0.466" stop-color="#fffa00"/><stop offset="0.533" stop-color="#ff7200"/><stop offset="0.576" stop-color="#ff1c00"/><stop offset="0.603" stop-color="#f80007"/><stop offset="0.674" stop-color="#a3005c"/><stop offset="0.841" stop-color="#3400cb"/><stop offset="1.000" stop-color="#4c00b3"/></linearGradient><linearGradient id="g35"><stop offset="0.000" stop-color="#ffcc00"/><stop offset="0.184" stop-color="#ffff00"/><stop offset="0.334" stop-color="#fff900"/><stop offset="0.401" stop-color="#ffc300"/><stop offset="0.553" stop-color="#fa0005"/><stop offset="0.614" stop-color="#c0003f"/><stop offset="0.701" stop-color="#85007a"/><stop offset="0.844" stop-color="#4100be"/><stop offset="1.000" stop-color="#4c00b3"/></linearGradient><linearGradient id="g36"><stop offset="0.000" stop-color="#ff8000"/><stop offset="0.169" stop-color="#ff6000"/><stop offset="0.263" stop-color="#fe0001"/><stop offset="0.361" stop-color="#f5000a"/><stop offset="0.499" stop-color="#fa0005"/><stop offset="0.673" stop-color="#7e0081"/><stop offset="0.876" stop-color="#71008e"/><stop offset="1.000" stop-color="#7a0085"/></linearGradient><linearGradient id="g37"><stop offset="0.000" stop-color="#ff4d00"/><stop offset="0.166" stop-color="#ff2e00"/><stop offset="0.191" stop-color="#f80007"/><stop offset="0.283" stop-color="#3f00c0"/><stop offset="0.329" stop-color="#3900c6"/><stop offset="0.394" stop-color="#cf0030"/><stop offset="0.466" stop-color="#ff0600"/><stop offset="0.501" stop-color="#ff1900"/><stop offset="0.854" stop-color="#f90006"/><stop offset="1.000" stop-color="#cc0033"/></linearGradient><linearGradient id="g38"><stop offset="0.000" stop-color="#ff0000"/><stop offset="0.171" stop-color="#ff1500"/><stop offset="0.224" stop-color="#f70008"/><stop offset="0.333" stop-color="#c2003d"/><stop offset="0.509" stop-color="#ff0000"/><stop offset="0.854" stop-color="#f90006"/><stop offset="1.000" stop-color="#cc0033"/></linearGradient><linearGradient id="g39"><stop offset="0.000" stop-color="#e60019"/><stop offset="0.170" stop-color="#fa0005"/><stop offset="0.334" stop-color="#8c0073"/><stop offset="0.581" stop-color="#960069"/><stop offset="0.729" stop-color="#b0004f"/><stop offset="0.850" stop-color="#ca0035"/><stop offset="1.000" stop-color="#b3004c"/></linearGradient><linearGradient id="g40"><stop offset="0.000" stop-color="#cc0033"/><stop offset="0.170" stop-color="#ac0053"/><stop offset="0.330" stop-color="#1300ec"/><stop offset="0.501" stop-color="#4a00b5"/><stop offset="0.671" stop-color="#2a00d5"/><stop offset="0.851" stop-color="#7c0083"/><stop offset="1.000" stop-color="#8c0073"/></linearGradient><linearGradient id="g41"><stop offset="0.000" stop-color="#8c0073"/><stop offset="0.406" stop-color="#6e0091"/><stop offset="0.509" stop-color="#670098"/><stop offset="0.671" stop-color="#2900d6"/><stop offset="1.000" stop-color="#7f0080"/></linearGradient><linearGradient id="g42"><stop offset="0.000" stop-color="#5900a6"/><stop offset="0.174" stop-color="#4400bb"/><stop offset="0.370" stop-color="#83007c"/><stop offset="0.506" stop-color="#95006a"/><stop offset="0.690" stop-color="#6e0091"/><stop offset="1.000" stop-color="#7a0085"/></linearGradient><linearGradient id="g43"><stop offset="0.000" stop-color="#4c00b2"/><stop offset="0.333" stop-color="#e3001c"/><stop offset="0.529" stop-color="#960069"/><stop offset="0.671" stop-color="#4e00b1"/><stop offset="1.000" stop-color="#7a0085"/></linearGradient><linearGradient id="g44"><stop offset="0.000" stop-color="#6e0091"/><stop offset="0.173" stop-color="#e70018"/><stop offset="0.363" stop-color="#ff0700"/><stop offset="0.394" stop-color="#ff0700"/><stop offset="0.426" stop-color="#d90026"/><stop offset="0.497" stop-color="#780087"/><stop offset="0.676" stop-color="#4200bd"/><stop offset="1.000" stop-color="#7a0085"/></linearGradient><linearGradient id="g45"><stop offset="0.000" stop-color="#990066"/><stop offset="0.184" stop-color="#e90016"/><stop offset="0.379" stop-color="#ff0000"/><stop offset="0.400" stop-color="#f4000b"/><stop offset="0.500" stop-color="#890076"/><stop offset="0.694" stop-color="#4800b7"/><stop offset="0.844" stop-color="#3700c8"/><stop offset="1.000" stop-color="#7a0085"/></linearGradient><linearGradient id="g46"><stop offset="0.000" stop-color="#ff3300"/><stop offset="0.126" stop-color="#ff4a00"/><stop offset="0.160" stop-color="#fa0005"/><stop offset="0.244" stop-color="#1a00e5"/><stop offset="0.333" stop-color="#e2001d"/><stop offset="0.359" stop-color="#ff0700"/><stop offset="0.394" stop-color="#ff3300"/><stop offset="0.499" stop-color="#ff1f00"/><stop offset="0.537" stop-color="#f80007"/><stop offset="0.676" stop-color="#74008b"/><stop offset="0.841" stop-color="#2900d6"/><stop offset="1.000" stop-color="#660099"/></linearGradient><linearGradient id="g47"><stop offset="0.000" stop-color="#ff8c00"/><stop offset="0.167" stop-color="#ffce00"/><stop offset="0.290" stop-color="#ff5b00"/><stop offset="0.331" stop-color="#ff3400"/><stop offset="0.497" stop-color="#ff4800"/><stop offset="0.603" stop-color="#f90006"/><stop offset="0.790" stop-color="#80007f"/><stop offset="0.847" stop-color="#660099"/><stop offset="1.000" stop-color="#660099"/></linearGradient><linearGradient id="g48"><stop offset="0.000" stop-color="#fff200"/><stop offset="0.169" stop-color="#ffcb00"/><stop offset="0.300" stop-color="#ff3f00"/><stop offset="0.346" stop-color="#ff1f00"/><stop offset="0.444" stop-color="#f80007"/><stop offset="0.747" stop-color="#960069"/><stop offset="0.873" stop-color="#7e0081"/><stop offset="1.000" stop-color="#7a0085"/></linearGradient><linearGradient id="g49"><stop offset="0.000" stop-color="#ffff00"/><stop offset="0.104" stop-color="#ffff57"/><stop offset="0.179" stop-color="#fffb00"/><stop offset="0.237" stop-color="#ff1700"/><stop offset="0.263" stop-color="#f70008"/><stop offset="0.337" stop-color="#a4005b"/><stop offset="0.497" stop-color="#4700b8"/><stop offset="0.691" stop-color="#8a0075"/><stop offset="0.843" stop-color="#d70028"/><stop offset="1.000" stop-color="#bf0040"/></linearGradient><linearGradient id="g50"><stop offset="0.000" stop-color="#ffff0d"/><stop offset="0.103" stop-color="#ffff4b"/><stop offset="0.133" stop-color="#fff900"/><stop offset="0.171" stop-color="#ff8d00"/><stop offset="0.203" stop-color="#fb0004"/><stop offset="0.214" stop-color="#ca0035"/><stop offset="0.273" stop-color="#7e0081"/><stop offset="0.331" stop-color="#4d00b2"/><stop offset="0.501" stop-color="#62009d"/><stop offset="0.667" stop-color="#2200dd"/><stop offset="0.839" stop-color="#be0041"/><stop offset="1.000" stop-color="#80007f"/></linearGradient><linearGradient id="g51"><stop offset="0.000" stop-color="#ffe500"/><stop offset="0.070" stop-color="#ffff08"/><stop offset="0.083" stop-color="#ffff08"/><stop offset="0.104" stop-color="#ffe200"/><stop offset="0.127" stop-color="#ffb500"/><stop offset="0.171" stop-color="#ff1400"/><stop offset="0.186" stop-color="#f80007"/><stop offset="0.240" stop-color="#960069"/><stop offset="0.330" stop-color="#6a0095"/><stop offset="0.394" stop-color="#a90056"/><stop offset="0.749" stop-color="#1d00e2"/><stop offset="0.839" stop-color="#7f0080"/><stop offset="1.000" stop-color="#5900a6"/></linearGradient><linearGradient id="g52"><stop offset="0.000" stop-color="#ffb200"/><stop offset="0.081" stop-color="#ffd600"/><stop offset="0.140" stop-color="#ff4300"/><stop offset="0.157" stop-color="#f80007"/><stop offset="0.193" stop-color="#64009b"/><stop offset="0.261" stop-color="#1200ed"/><stop offset="0.327" stop-color="#1c00e3"/><stop offset="0.391" stop-color="#cc0033"/><stop offset="0.511" stop-color="#9c0063"/><stop offset="0.673" stop-color="#91006e"/><stop offset="0.839" stop-color="#e2001d"/><stop offset="1.000" stop-color="#660099"/></linearGradient><linearGradient id="g53"><stop offset="0.000" stop-color="#ff6600"/><stop offset="0.081" stop-color="#ff9600"/><stop offset="0.163" stop-color="#fe0001"/><stop offset="0.217" stop-color="#a90056"/><stop offset="0.330" stop-color="#84007b"/><stop offset="0.394" stop-color="#cc0033"/><stop offset="0.479" stop-color="#bd0042"/><stop offset="0.500" stop-color="#7d0082"/><stop offset="0.640" stop-color="#2200dd"/><stop offset="0.804" stop-color="#b4004b"/><stop offset="0.873" stop-color="#bb0044"/><stop offset="0.986" stop-color="#70008f"/><stop offset="1.000" stop-color="#660099"/></linearGradient><linearGradient id="g54"><stop offset="0.000" stop-color="#ff0000"/><stop offset="0.083" stop-color="#ff4a00"/><stop offset="0.173" stop-color="#fa0005"/><stop offset="0.261" stop-color="#8d0072"/><stop offset="0.334" stop-color="#a1005e"/><stop offset="0.393" stop-color="#d5002a"/><stop offset="0.491" stop-color="#3300cc"/><stop offset="0.647" stop-color="#3900c6"/><stop offset="0.826" stop-color="#970068"/><stop offset="0.936" stop-color="#71008e"/><stop offset="1.000" stop-color="#4c00b2"/></linearGradient><linearGradient id="g55"><stop offset="0.000" stop-color="#b2004d"/><stop offset="0.127" stop-color="#e2001d"/><stop offset="0.253" stop-color="#4600b9"/><stop offset="0.261" stop-color="#4500ba"/><stop offset="0.361" stop-color="#c5003a"/><stop offset="0.393" stop-color="#e3001c"/><stop offset="0.479" stop-color="#790086"/><stop offset="0.499" stop-color="#4600b9"/><stop offset="0.643" stop-color="#4700b8"/><stop offset="0.721" stop-color="#4500ba"/><stop offset="0.823" stop-color="#62009d"/><stop offset="0.891" stop-color="#2800d7"/><stop offset="1.000" stop-color="#4c00b2"/></linearGradient><linearGradient id="g56"><stop offset="0.000" stop-color="#5900a6"/><stop offset="0.213" stop-color="#72008d"/><stop offset="0.330" stop-color="#93006c"/><stop offset="0.391" stop-color="#fe0001"/><stop offset="0.440" stop-color="#c0003f"/><stop offset="0.489" stop-color="#5200ad"/><stop offset="0.630" stop-color="#3700c8"/><stop offset="0.731" stop-color="#0300fc"/><stop offset="0.823" stop-color="#4300bc"/><stop offset="0.894" stop-color="#2900d6"/><stop offset="1.000" stop-color="#5900a6"/></linearGradient><linearGradient id="g57"><stop offset="0.000" stop-color="#4000bf"/><stop offset="0.063" stop-color="#1400eb"/><stop offset="0.174" stop-color="#4400bb"/><stop offset="0.260" stop-color="#4400bb"/><stop offset="0.337" stop-color="#b60049"/><stop offset="0.414" stop-color="#fd0002"/><stop offset="0.461" stop-color="#c1003e"/><stop offset="0.480" stop-color="#8d0072"/><stop offset="0.501" stop-color="#4300bc"/><stop offset="0.536" stop-color="#0b00f4"/><stop offset="0.643" stop-color="#3d00c2"/><stop offset="0.733" stop-color="#1800e7"/><stop offset="0.916" stop-color="#970068"/><stop offset="1.000" stop-color="#800080"/></linearGradient><linearGradient id="g58"><stop offset="0.000" stop-color="#3300cc"/><stop offset="0.170" stop-color="#5500aa"/><stop offset="0.277" stop-color="#1700e8"/><stop offset="0.331" stop-color="#93006c"/><stop offset="0.414" stop-color="#fd0002"/><stop offset="0.484" stop-color="#9d0062"/><stop offset="0.510" stop-color="#8b0074"/><stop offset="0.577" stop-color="#4100be"/><stop offset="0.709" stop-color="#0d00f2"/><stop offset="0.847" stop-color="#8f0070"/><stop offset="0.913" stop-color="#cf0030"/><stop offset="1.000" stop-color="#800080"/></linearGradient><linearGradient id="g59"><stop offset="0.000" stop-color="#4500ba"/><stop offset="0.121" stop-color="#1500ea"/><stop offset="0.241" stop-color="#5800a7"/><stop offset="0.329" stop-color="#4500ba"/><stop offset="0.399" stop-color="#d80027"/><stop offset="0.430" stop-color="#ff0600"/><stop offset="0.437" stop-color="#ff0800"/><stop offset="0.457" stop-color="#da0025"/><stop offset="0.480" stop-color="#ad0052"/><stop offset="0.501" stop-color="#a60059"/><stop offset="0.549" stop-color="#3f00c0"/><stop offset="0.700" stop-color="#2a00d5"/><stop offset="0.823" stop-color="#4700b8"/><stop offset="0.911" stop-color="#dc0023"/><stop offset="1.000" stop-color="#800080"/></linearGradient><linearGradient id="g60"><stop offset="0.000" stop-color="#4500ba"/><stop offset="0.201" stop-color="#7f0080"/><stop offset="0.333" stop-color="#bb0044"/><stop offset="0.389" stop-color="#ff0600"/><stop offset="0.414" stop-color="#ff2400"/><stop offset="0.444" stop-color="#f80007"/><stop offset="0.463" stop-color="#d5002a"/><stop offset="0.480" stop-color="#aa0055"/><stop offset="0.499" stop-color="#880077"/><stop offset="0.524" stop-color="#2600d9"/><stop offset="0.660" stop-color="#0c00f3"/><stop offset="0.799" stop-color="#1900e6"/><stop offset="0.871" stop-color="#a1005e"/><stop offset="0.913" stop-color="#c90036"/><stop offset="1.000" stop-color="#6e0091"/></linearGradient><linearGradient id="g61"><stop offset="0.000" stop-color="#4c00b2"/><stop offset="0.130" stop-color="#1d00e2"/><stop offset="0.239" stop-color="#60009f"/><stop offset="0.316" stop-color="#ff0400"/><stop offset="0.336" stop-color="#ff2200"/><stop offset="0.414" stop-color="#ff6400"/><stop offset="0.459" stop-color="#ff1f00"/><stop offset="0.467" stop-color="#f80007"/><stop offset="0.486" stop-color="#ae0051"/><stop offset="0.510" stop-color="#8b0074"/><stop offset="0.549" stop-color="#4500ba"/><stop offset="0.724" stop-color="#5700a8"/><stop offset="0.831" stop-color="#770088"/><stop offset="0.913" stop-color="#af0050"/><stop offset="1.000" stop-color="#4000bf"/></linearGradient><linearGradient id="g62"><stop offset="0.000" stop-color="#5900a6"/><stop offset="0.129" stop-color="#1500ea"/><stop offset="0.260" stop-color="#74008b"/><stop offset="0.323" stop-color="#ff0500"/><stop offset="0.414" stop-color="#ff5700"/><stop offset="0.459" stop-color="#ff1300"/><stop offset="0.466" stop-color="#f5000a"/><stop offset="0.489" stop-color="#970068"/><stop offset="0.597" stop-color="#4e00b1"/><stop offset="0.686" stop-color="#62009d"/><stop offset="0.753" stop-color="#1700e8"/><stop offset="0.844" stop-color="#6b0094"/><stop offset="0.963" stop-color="#0a00f5"/><stop offset="1.000" stop-color="#0a00f5"/></linearGradient><linearGradient id="g63"><stop offset="0.000" stop-color="#660099"/><stop offset="0.194" stop-color="#680097"/><stop offset="0.283" stop-color="#5e00a1"/><stop offset="0.413" stop-color="#ff0000"/><stop offset="0.480" stop-color="#6d0092"/><stop offset="0.496" stop-color="#4b00b4"/><stop offset="0.611" stop-color="#3500ca"/><stop offset="0.829" stop-color="#5500aa"/><stop offset="0.954" stop-color="#2400db"/><stop offset="1.000" stop-color="#1f00e0"/></linearGradient><linearGradient id="g64"><stop offset="0.000" stop-color="#5900a6"/><stop offset="0.170" stop-color="#61009e"/><stop offset="0.281" stop-color="#1500ea"/><stop offset="0.327" stop-color="#6b0094"/><stop offset="0.360" stop-color="#1400eb"/><stop offset="0.413" stop-color="#e5001a"/><stop offset="0.459" stop-color="#c60039"/><stop offset="0.480" stop-color="#690096"/><stop offset="0.491" stop-color="#3c00c3"/><stop offset="0.573" stop-color="#0200fd"/><stop offset="0.714" stop-color="#3e00c1"/><stop offset="0.969" stop-color="#0d00f2"/><stop offset="1.000" stop-color="#1400eb"/></linearGradient><linearGradient id="g65"><stop offset="0.000" stop-color="#4500ba"/><stop offset="0.097" stop-color="#1500ea"/><stop offset="0.170" stop-color="#4c00b2"/><stop offset="0.329" stop-color="#5100ae"/><stop offset="0.414" stop-color="#fe0001"/><stop offset="0.457" stop-color="#e5001a"/><stop offset="0.487" stop-color="#5e00a1"/><stop offset="0.573" stop-color="#0c00f3"/><stop offset="0.721" stop-color="#3100ce"/><stop offset="0.826" stop-color="#2b00d4"/><stop offset="0.914" stop-color="#64009b"/><stop offset="1.000" stop-color="#4000bf"/></linearGradient><linearGradient id="g66"><stop offset="0.000" stop-color="#4500ba"/><stop offset="0.060" stop-color="#8a0075"/><stop offset="0.166" stop-color="#1b00e4"/><stop offset="0.331" stop-color="#6f0090"/><stop offset="0.414" stop-color="#ef0010"/><stop offset="0.480" stop-color="#6a0095"/><stop offset="0.503" stop-color="#6d0092"/><stop offset="0.573" stop-color="#1f00e0"/><stop offset="0.776" stop-color="#3800c7"/><stop offset="0.834" stop-color="#4b00b4"/><stop offset="0.914" stop-color="#7d0082"/><stop offset="1.000" stop-color="#4500ba"/></linearGradient><linearGradient id="g67"><stop offset="0.000" stop-color="#4700b8"/><stop offset="0.017" stop-color="#660099"/><stop offset="0.027" stop-color="#a1005e"/><stop offset="0.036" stop-color="#d2002d"/><stop offset="0.043" stop-color="#cb0034"/><stop offset="0.056" stop-color="#ad0052"/><stop offset="0.079" stop-color="#9b0064"/><stop offset="0.119" stop-color="#4900b6"/><stop offset="0.190" stop-color="#2300dc"/><stop offset="0.240" stop-color="#1e00e1"/><stop offset="0.277" stop-color="#1500ea"/><stop offset="0.319" stop-color="#3700c8"/><stop offset="0.337" stop-color="#65009a"/><stop offset="0.350" stop-color="#5100ae"/><stop offset="0.364" stop-color="#3b00c4"/><stop offset="0.384" stop-color="#5700a8"/><stop offset="0.413" stop-color="#9c0063"/><stop offset="0.427" stop-color="#95006a"/><stop offset="0.464" stop-color="#3000cf"/><stop offset="0.497" stop-color="#1300ec"/><stop offset="0.691" stop-color="#2f00d0"/><stop offset="0.786" stop-color="#1e00e1"/><stop offset="0.914" stop-color="#63009c"/><stop offset="0.951" stop-color="#8b0074"/><stop offset="1.000" stop-color="#73008c"/></linearGradient><linearGradient id="g68"><stop offset="0.000" stop-color="#1900e6"/><stop offset="0.017" stop-color="#2600d9"/><stop offset="0.029" stop-color="#5900a6"/><stop offset="0.037" stop-color="#7f0080"/><stop offset="0.053" stop-color="#94006b"/><stop offset="0.074" stop-color="#ff0400"/><stop offset="0.087" stop-color="#ff2e00"/><stop offset="0.099" stop-color="#ff2900"/><stop offset="0.110" stop-color="#fe0001"/><stop offset="0.139" stop-color="#6f0090"/><stop offset="0.160" stop-color="#3200cd"/><stop offset="0.187" stop-color="#1900e6"/><stop offset="0.267" stop-color="#1d00e2"/><stop offset="0.324" stop-color="#3f00c0"/><stop offset="0.340" stop-color="#5000af"/><stop offset="0.367" stop-color="#2d00d2"/><stop offset="0.439" stop-color="#3300cc"/><stop offset="0.503" stop-color="#2200dd"/><stop offset="0.614" stop-color="#1f00e0"/><stop offset="0.717" stop-color="#2f00d0"/><stop offset="0.826" stop-color="#1100ee"/><stop offset="0.941" stop-color="#5800a7"/><stop offset="1.000" stop-color="#4c00b2"/></linearGradient><linearGradient id="g69"><stop offset="0.000" stop-color="#2500da"/><stop offset="0.017" stop-color="#3d00c2"/><stop offset="0.026" stop-color="#6d0092"/><stop offset="0.036" stop-color="#ae0051"/><stop offset="0.053" stop-color="#b90046"/><stop offset="0.066" stop-color="#ff0000"/><stop offset="0.081" stop-color="#ff5700"/><stop offset="0.091" stop-color="#ff6900"/><stop offset="0.101" stop-color="#ff5400"/><stop offset="0.116" stop-color="#ff0100"/><stop offset="0.137" stop-color="#760089"/><stop offset="0.153" stop-color="#3b00c4"/><stop offset="0.173" stop-color="#2200dd"/><stop offset="0.234" stop-color="#2500da"/><stop offset="0.319" stop-color="#2a00d5"/><stop offset="0.340" stop-color="#4f00b0"/><stop offset="0.367" stop-color="#2800d7"/><stop offset="0.414" stop-color="#3700c8"/><stop offset="0.449" stop-color="#3800c7"/><stop offset="0.500" stop-color="#1c00e3"/><stop offset="0.623" stop-color="#2100de"/><stop offset="0.730" stop-color="#3100ce"/><stop offset="0.897" stop-color="#2a00d5"/><stop offset="1.000" stop-color="#3300cc"/></linearGradient><linearGradient id="g70"><stop offset="0.000" stop-color="#2600d9"/><stop offset="0.019" stop-color="#3c00c3"/><stop offset="0.036" stop-color="#90006f"/><stop offset="0.051" stop-color="#9b0064"/><stop offset="0.063" stop-color="#d70028"/><stop offset="0.069" stop-color="#ff0200"/><stop offset="0.084" stop-color="#ff6a00"/><stop offset="0.094" stop-color="#ff8600"/><stop offset="0.104" stop-color="#ff7400"/><stop offset="0.117" stop-color="#ff2800"/><stop offset="0.123" stop-color="#fc0003"/><stop offset="0.140" stop-color="#870078"/><stop offset="0.156" stop-color="#4c00b3"/><stop offset="0.179" stop-color="#3400cb"/><stop offset="0.253" stop-color="#1700e8"/><stop offset="0.313" stop-color="#2700d8"/><stop offset="0.327" stop-color="#5300ac"/><stop offset="0.339" stop-color="#75008a"/><stop offset="0.350" stop-color="#61009e"/><stop offset="0.366" stop-color="#4000bf"/><stop offset="0.389" stop-color="#4c00b3"/><stop offset="0.419" stop-color="#7c0083"/><stop offset="0.436" stop-color="#6a0095"/><stop offset="0.469" stop-color="#1d00e2"/><stop offset="0.494" stop-color="#1500ea"/><stop offset="0.661" stop-color="#3d00c2"/><stop offset="0.790" stop-color="#2a00d5"/><stop offset="0.921" stop-color="#4900b6"/><stop offset="1.000" stop-color="#2600d9"/></linearGradient><linearGradient id="g71"><stop offset="0.000" stop-color="#1700e8"/><stop offset="0.020" stop-color="#2e00d1"/><stop offset="0.036" stop-color="#63009c"/><stop offset="0.053" stop-color="#5c00a3"/><stop offset="0.064" stop-color="#890076"/><stop offset="0.080" stop-color="#fe0001"/><stop offset="0.093" stop-color="#ff5e00"/><stop offset="0.101" stop-color="#ff7b00"/><stop offset="0.110" stop-color="#ff6f00"/><stop offset="0.121" stop-color="#ff2800"/><stop offset="0.127" stop-color="#f80007"/><stop offset="0.143" stop-color="#83007c"/><stop offset="0.157" stop-color="#4900b6"/><stop offset="0.181" stop-color="#2a00d5"/><stop offset="0.233" stop-color="#1300ec"/><stop offset="0.291" stop-color="#2900d6"/><stop offset="0.317" stop-color="#3500ca"/><stop offset="0.339" stop-color="#65009a"/><stop offset="0.354" stop-color="#4700b8"/><stop offset="0.370" stop-color="#3400cb"/><stop offset="0.387" stop-color="#4f00b0"/><stop offset="0.414" stop-color="#ac0053"/><stop offset="0.426" stop-color="#af0050"/><stop offset="0.441" stop-color="#7e0081"/><stop offset="0.463" stop-color="#3400cb"/><stop offset="0.481" stop-color="#2300dc"/><stop offset="0.646" stop-color="#3300cc"/><stop offset="0.773" stop-color="#5600a9"/><stop offset="0.854" stop-color="#4400bb"/><stop offset="0.916" stop-color="#71008e"/><stop offset="1.000" stop-color="#3300cc"/></linearGradient><linearGradient id="g72"><stop offset="0.000" stop-color="#2500da"/><stop offset="0.026" stop-color="#4400bb"/><stop offset="0.037" stop-color="#5500aa"/><stop offset="0.056" stop-color="#4200bd"/><stop offset="0.070" stop-color="#5f00a0"/><stop offset="0.081" stop-color="#9f0060"/><stop offset="0.094" stop-color="#ff0500"/><stop offset="0.103" stop-color="#ff2d00"/><stop offset="0.110" stop-color="#ff2600"/><stop offset="0.117" stop-color="#fb0004"/><stop offset="0.134" stop-color="#73008c"/><stop offset="0.146" stop-color="#4300bc"/><stop offset="0.167" stop-color="#2f00d0"/><stop offset="0.231" stop-color="#2400db"/><stop offset="0.274" stop-color="#2800d7"/><stop offset="0.311" stop-color="#2000df"/><stop offset="0.340" stop-color="#4c00b3"/><stop offset="0.366" stop-color="#2900d6"/><stop offset="0.381" stop-color="#4100be"/><stop offset="0.413" stop-color="#c4003b"/><stop offset="0.424" stop-color="#cd0032"/><stop offset="0.439" stop-color="#a0005f"/><stop offset="0.460" stop-color="#4600b9"/><stop offset="0.479" stop-color="#2900d6"/><stop offset="0.540" stop-color="#2800d7"/><stop offset="0.713" stop-color="#3b00c4"/><stop offset="0.767" stop-color="#1c00e3"/><stop offset="0.914" stop-color="#7d0082"/><stop offset="0.980" stop-color="#1b00e4"/><stop offset="1.000" stop-color="#2600d9"/></linearGradient><linearGradient id="g73"><stop offset="0.000" stop-color="#2900d6"/><stop offset="0.043" stop-color="#2b00d4"/><stop offset="0.061" stop-color="#2c00d3"/><stop offset="0.077" stop-color="#5200ad"/><stop offset="0.103" stop-color="#d3002c"/><stop offset="0.111" stop-color="#d80027"/><stop offset="0.123" stop-color="#aa0055"/><stop offset="0.139" stop-color="#5d00a2"/><stop offset="0.154" stop-color="#4100be"/><stop offset="0.227" stop-color="#1e00e1"/><stop offset="0.301" stop-color="#1800e7"/><stop offset="0.327" stop-color="#3b00c4"/><stop offset="0.341" stop-color="#4900b6"/><stop offset="0.366" stop-color="#3200cd"/><stop offset="0.383" stop-color="#5000af"/><stop offset="0.411" stop-color="#b80047"/><stop offset="0.423" stop-color="#bd0042"/><stop offset="0.437" stop-color="#90006f"/><stop offset="0.459" stop-color="#3900c6"/><stop offset="0.477" stop-color="#1e00e1"/><stop offset="0.621" stop-color="#2900d6"/><stop offset="0.729" stop-color="#3d00c2"/><stop offset="0.807" stop-color="#5900a6"/><stop offset="0.927" stop-color="#5300ac"/><stop offset="1.000" stop-color="#3300cc"/></linearGradient><linearGradient id="g74"><stop offset="0.000" stop-color="#1c00e3"/><stop offset="0.023" stop-color="#2500da"/><stop offset="0.039" stop-color="#3b00c4"/><stop offset="0.056" stop-color="#2f00d0"/><stop offset="0.076" stop-color="#5500aa"/><stop offset="0.103" stop-color="#bf0040"/><stop offset="0.113" stop-color="#bf0040"/><stop offset="0.140" stop-color="#5500aa"/><stop offset="0.156" stop-color="#4500ba"/><stop offset="0.191" stop-color="#5800a7"/><stop offset="0.231" stop-color="#2400db"/><stop offset="0.294" stop-color="#2500da"/><stop offset="0.340" stop-color="#3f00c0"/><stop offset="0.366" stop-color="#2600d9"/><stop offset="0.384" stop-color="#4100be"/><stop offset="0.413" stop-color="#93006c"/><stop offset="0.426" stop-color="#91006e"/><stop offset="0.460" stop-color="#3600c9"/><stop offset="0.503" stop-color="#2700d8"/><stop offset="0.620" stop-color="#2400db"/><stop offset="0.796" stop-color="#62009d"/><stop offset="0.863" stop-color="#2700d8"/><stop offset="1.000" stop-color="#3300cc"/></linearGradient><linearGradient id="g75"><stop offset="0.000" stop-color="#2800d7"/><stop offset="0.020" stop-color="#3300cc"/><stop offset="0.036" stop-color="#680097"/><stop offset="0.047" stop-color="#4b00b4"/><stop offset="0.059" stop-color="#3e00c1"/><stop offset="0.077" stop-color="#5d00a2"/><stop offset="0.103" stop-color="#c3003c"/><stop offset="0.113" stop-color="#c2003d"/><stop offset="0.131" stop-color="#70008f"/><stop offset="0.146" stop-color="#4400bb"/><stop offset="0.166" stop-color="#4100be"/><stop offset="0.196" stop-color="#5100ae"/><stop offset="0.264" stop-color="#2300dc"/><stop offset="0.313" stop-color="#2c00d3"/><stop offset="0.339" stop-color="#5100ae"/><stop offset="0.364" stop-color="#2300dc"/><stop offset="0.391" stop-color="#3c00c3"/><stop offset="0.419" stop-color="#5600a9"/><stop offset="0.504" stop-color="#1b00e4"/><stop offset="0.546" stop-color="#1000ef"/><stop offset="0.834" stop-color="#5700a8"/><stop offset="1.000" stop-color="#4000bf"/></linearGradient><linearGradient id="g76"><stop offset="0.000" stop-color="#2700d8"/><stop offset="0.020" stop-color="#2700d8"/><stop offset="0.036" stop-color="#5000af"/><stop offset="0.056" stop-color="#3400cb"/><stop offset="0.073" stop-color="#4b00b4"/><stop offset="0.086" stop-color="#82007d"/><stop offset="0.103" stop-color="#e2001d"/><stop offset="0.111" stop-color="#ec0013"/><stop offset="0.121" stop-color="#c80037"/><stop offset="0.140" stop-color="#6a0095"/><stop offset="0.157" stop-color="#4800b7"/><stop offset="0.214" stop-color="#3500ca"/><stop offset="0.267" stop-color="#1200ed"/><stop offset="0.317" stop-color="#3400cb"/><stop offset="0.337" stop-color="#65009a"/><stop offset="0.349" stop-color="#5400ab"/><stop offset="0.364" stop-color="#3500ca"/><stop offset="0.447" stop-color="#1b00e4"/><stop offset="0.560" stop-color="#1000ef"/><stop offset="0.754" stop-color="#2f00d0"/><stop offset="0.827" stop-color="#4900b6"/><stop offset="0.941" stop-color="#1c00e3"/><stop offset="1.000" stop-color="#3300cc"/></linearGradient><linearGradient id="g77"><stop offset="0.000" stop-color="#1500ea"/><stop offset="0.021" stop-color="#1e00e1"/><stop offset="0.039" stop-color="#3e00c1"/><stop offset="0.061" stop-color="#4100be"/><stop offset="0.077" stop-color="#670098"/><stop offset="0.091" stop-color="#b70048"/><stop offset="0.103" stop-color="#f80007"/><stop offset="0.114" stop-color="#fc0003"/><stop offset="0.127" stop-color="#b60049"/><stop offset="0.143" stop-color="#5f00a0"/><stop offset="0.161" stop-color="#3200cd"/><stop offset="0.193" stop-color="#1c00e3"/><stop offset="0.266" stop-color="#1e00e1"/><stop offset="0.316" stop-color="#4c00b3"/><stop offset="0.330" stop-color="#8c0073"/><stop offset="0.339" stop-color="#a5005a"/><stop offset="0.347" stop-color="#8a0075"/><stop offset="0.361" stop-color="#4500ba"/><stop offset="0.393" stop-color="#2000df"/><stop offset="0.427" stop-color="#1300ec"/><stop offset="0.480" stop-color="#2100de"/><stop offset="0.616" stop-color="#1f00e0"/><stop offset="0.723" stop-color="#3000cf"/><stop offset="0.869" stop-color="#1d00e2"/><stop offset="1.000" stop-color="#3300cc"/></linearGradient><linearGradient id="g78"><stop offset="0.000" stop-color="#1f00e0"/><stop offset="0.070" stop-color="#4d00b2"/><stop offset="0.083" stop-color="#790086"/><stop offset="0.103" stop-color="#eb0014"/><stop offset="0.111" stop-color="#f4000b"/><stop offset="0.121" stop-color="#ca0035"/><stop offset="0.140" stop-color="#5a00a5"/><stop offset="0.156" stop-color="#2f00d0"/><stop offset="0.184" stop-color="#2500da"/><stop offset="0.234" stop-color="#2500da"/><stop offset="0.311" stop-color="#3500ca"/><stop offset="0.321" stop-color="#5300ac"/><stop offset="0.336" stop-color="#a0005f"/><stop offset="0.343" stop-color="#9d0062"/><stop offset="0.361" stop-color="#4200bd"/><stop offset="0.384" stop-color="#2700d8"/><stop offset="0.421" stop-color="#2200dd"/><stop offset="0.463" stop-color="#2900d6"/><stop offset="0.513" stop-color="#1c00e3"/><stop offset="0.860" stop-color="#1a00e5"/><stop offset="0.943" stop-color="#3e00c1"/><stop offset="1.000" stop-color="#3300cc"/></linearGradient><linearGradient id="g79"><stop offset="0.000" stop-color="#2100de"/><stop offset="0.066" stop-color="#3900c6"/><stop offset="0.079" stop-color="#62009d"/><stop offset="0.094" stop-color="#d1002e"/><stop offset="0.101" stop-color="#ff0200"/><stop offset="0.109" stop-color="#ff1700"/><stop offset="0.116" stop-color="#ff0900"/><stop offset="0.120" stop-color="#f1000e"/><stop offset="0.139" stop-color="#74008b"/><stop offset="0.151" stop-color="#4700b8"/><stop offset="0.179" stop-color="#3500ca"/><stop offset="0.251" stop-color="#1700e8"/><stop offset="0.311" stop-color="#2f00d0"/><stop offset="0.323" stop-color="#5a00a5"/><stop offset="0.336" stop-color="#a1005e"/><stop offset="0.343" stop-color="#a1005e"/><stop offset="0.363" stop-color="#4b00b4"/><stop offset="0.397" stop-color="#2600d9"/><stop offset="0.463" stop-color="#1700e8"/><stop offset="0.500" stop-color="#1800e7"/><stop offset="0.567" stop-color="#5800a7"/><stop offset="0.751" stop-color="#1a00e6"/><stop offset="0.883" stop-color="#1f00e0"/><stop offset="0.939" stop-color="#4b00b4"/><stop offset="1.000" stop-color="#3300cc"/></linearGradient><linearGradient id="g80"><stop offset="0.000" stop-color="#1500ea"/><stop offset="0.023" stop-color="#2e00d1"/><stop offset="0.037" stop-color="#4a00b5"/><stop offset="0.057" stop-color="#3b00c4"/><stop offset="0.071" stop-color="#5a00a5"/><stop offset="0.083" stop-color="#9b0064"/><stop offset="0.094" stop-color="#fc0003"/><stop offset="0.104" stop-color="#ff3d00"/><stop offset="0.111" stop-color="#ff4100"/><stop offset="0.120" stop-color="#ff1300"/><stop offset="0.123" stop-color="#fb0004"/><stop offset="0.139" stop-color="#7c0083"/><stop offset="0.150" stop-color="#4a00b5"/><stop offset="0.173" stop-color="#2e00d1"/><stop offset="0.233" stop-color="#1400eb"/><stop offset="0.310" stop-color="#3c00c3"/><stop offset="0.321" stop-color="#64009b"/><stop offset="0.334" stop-color="#b0004f"/><stop offset="0.341" stop-color="#b60049"/><stop offset="0.351" stop-color="#80007f"/><stop offset="0.363" stop-color="#4400bb"/><stop offset="0.384" stop-color="#2000df"/><stop offset="0.420" stop-color="#1a00e5"/><stop offset="0.484" stop-color="#2200dd"/><stop offset="0.599" stop-color="#4900b6"/><stop offset="0.744" stop-color="#0f00f0"/><stop offset="0.889" stop-color="#2e00d1"/><stop offset="0.953" stop-color="#5600a9"/><stop offset="1.000" stop-color="#3300cc"/></linearGradient><linearGradient id="g81"><stop offset="0.000" stop-color="#2500da"/><stop offset="0.019" stop-color="#3c00c3"/><stop offset="0.034" stop-color="#81007e"/><stop offset="0.041" stop-color="#74008b"/><stop offset="0.053" stop-color="#4500ba"/><stop offset="0.066" stop-color="#4a00b5"/><stop offset="0.079" stop-color="#7a0085"/><stop offset="0.097" stop-color="#ff0400"/><stop offset="0.106" stop-color="#ff2b00"/><stop offset="0.113" stop-color="#ff2400"/><stop offset="0.120" stop-color="#f90006"/><stop offset="0.137" stop-color="#72008d"/><stop offset="0.149" stop-color="#4300bc"/><stop offset="0.171" stop-color="#3000cf"/><stop offset="0.231" stop-color="#2500da"/><stop offset="0.279" stop-color="#2900d6"/><stop offset="0.309" stop-color="#2e00d1"/><stop offset="0.320" stop-color="#5000af"/><stop offset="0.334" stop-color="#a4005b"/><stop offset="0.341" stop-color="#a90056"/><stop offset="0.353" stop-color="#690096"/><stop offset="0.364" stop-color="#3500ca"/><stop offset="0.384" stop-color="#2100de"/><stop offset="0.443" stop-color="#2700d8"/><stop offset="0.536" stop-color="#2800d7"/><stop offset="0.613" stop-color="#2f00d0"/><stop offset="0.753" stop-color="#1d00e2"/><stop offset="0.901" stop-color="#3000cf"/><stop offset="1.000" stop-color="#2600d9"/></linearGradient><linearGradient id="g82"><stop offset="0.000" stop-color="#2900d6"/><stop offset="0.024" stop-color="#3300cc"/><stop offset="0.037" stop-color="#4100be"/><stop offset="0.056" stop-color="#2b00d4"/><stop offset="0.071" stop-color="#4800b7"/><stop offset="0.084" stop-color="#860079"/><stop offset="0.101" stop-color="#f4000b"/><stop offset="0.110" stop-color="#ff0300"/><stop offset="0.117" stop-color="#eb0014"/><stop offset="0.139" stop-color="#6b0094"/><stop offset="0.153" stop-color="#4800b7"/><stop offset="0.223" stop-color="#1e00e1"/><stop offset="0.294" stop-color="#1d00e2"/><stop offset="0.313" stop-color="#3a00c5"/><stop offset="0.324" stop-color="#72008d"/><stop offset="0.334" stop-color="#ae0051"/><stop offset="0.341" stop-color="#b3004c"/><stop offset="0.353" stop-color="#75008a"/><stop offset="0.364" stop-color="#4100be"/><stop offset="0.387" stop-color="#2e00d1"/><stop offset="0.440" stop-color="#1a00e5"/><stop offset="0.480" stop-color="#1800e7"/><stop offset="0.717" stop-color="#1200ed"/><stop offset="0.883" stop-color="#5600a9"/><stop offset="1.000" stop-color="#1a00e6"/></linearGradient><linearGradient id="g83"><stop offset="0.000" stop-color="#1c00e3"/><stop offset="0.029" stop-color="#2700d8"/><stop offset="0.060" stop-color="#3800c7"/><stop offset="0.077" stop-color="#64009b"/><stop offset="0.101" stop-color="#dd0022"/><stop offset="0.110" stop-color="#e70018"/><stop offset="0.120" stop-color="#c4003b"/><stop offset="0.139" stop-color="#62009d"/><stop offset="0.156" stop-color="#3c00c3"/><stop offset="0.204" stop-color="#1400eb"/><stop offset="0.294" stop-color="#2d00d2"/><stop offset="0.316" stop-color="#4c00b3"/><stop offset="0.336" stop-color="#9e0061"/><stop offset="0.343" stop-color="#960069"/><stop offset="0.361" stop-color="#3b00c4"/><stop offset="0.379" stop-color="#2400db"/><stop offset="0.451" stop-color="#1600e9"/><stop offset="0.499" stop-color="#2800d7"/><stop offset="0.573" stop-color="#0f00f0"/><stop offset="0.861" stop-color="#5500aa"/><stop offset="0.909" stop-color="#70008f"/><stop offset="1.000" stop-color="#1a00e6"/></linearGradient><linearGradient id="g84"><stop offset="0.000" stop-color="#2800d7"/><stop offset="0.024" stop-color="#3100ce"/><stop offset="0.040" stop-color="#4100be"/><stop offset="0.060" stop-color="#3e00c1"/><stop offset="0.079" stop-color="#5f00a0"/><stop offset="0.103" stop-color="#be0041"/><stop offset="0.113" stop-color="#be0041"/><stop offset="0.141" stop-color="#4900b6"/><stop offset="0.166" stop-color="#2a00d5"/><stop offset="0.204" stop-color="#2200dd"/><stop offset="0.249" stop-color="#2a00d5"/><stop offset="0.290" stop-color="#2600d9"/><stop offset="0.316" stop-color="#3f00c0"/><stop offset="0.336" stop-color="#8c0073"/><stop offset="0.343" stop-color="#85007a"/><stop offset="0.360" stop-color="#3700c8"/><stop offset="0.376" stop-color="#2700d8"/><stop offset="0.459" stop-color="#2800d7"/><stop offset="0.493" stop-color="#2000df"/><stop offset="0.593" stop-color="#1a00e5"/><stop offset="0.730" stop-color="#2100de"/><stop offset="0.903" stop-color="#5b00a4"/><stop offset="0.921" stop-color="#5b00a4"/><stop offset="1.000" stop-color="#2600d9"/></linearGradient><linearGradient id="g85"><stop offset="0.000" stop-color="#2600d9"/><stop offset="0.029" stop-color="#2300dc"/><stop offset="0.069" stop-color="#3a00c5"/><stop offset="0.084" stop-color="#65009a"/><stop offset="0.104" stop-color="#bc0043"/><stop offset="0.114" stop-color="#bd0042"/><stop offset="0.143" stop-color="#5400ab"/><stop offset="0.174" stop-color="#2f00d0"/><stop offset="0.250" stop-color="#1700e8"/><stop offset="0.283" stop-color="#1a00e5"/><stop offset="0.316" stop-color="#3f00c0"/><stop offset="0.336" stop-color="#93006c"/><stop offset="0.343" stop-color="#90006f"/><stop offset="0.361" stop-color="#4500ba"/><stop offset="0.437" stop-color="#1a00e5"/><stop offset="0.703" stop-color="#1400eb"/><stop offset="0.901" stop-color="#3e00c1"/><stop offset="0.940" stop-color="#4800b7"/><stop offset="1.000" stop-color="#1a00e6"/></linearGradient><linearGradient id="g86"><stop offset="0.000" stop-color="#1500ea"/><stop offset="0.020" stop-color="#1c00e3"/><stop offset="0.037" stop-color="#4200bd"/><stop offset="0.060" stop-color="#3900c6"/><stop offset="0.079" stop-color="#5900a6"/><stop offset="0.104" stop-color="#c3003c"/><stop offset="0.114" stop-color="#c3003c"/><stop offset="0.144" stop-color="#4c00b3"/><stop offset="0.170" stop-color="#2200dd"/><stop offset="0.256" stop-color="#1900e6"/><stop offset="0.319" stop-color="#4400bb"/><stop offset="0.337" stop-color="#74008b"/><stop offset="0.347" stop-color="#63009c"/><stop offset="0.364" stop-color="#3300cc"/><stop offset="0.420" stop-color="#1100ee"/><stop offset="0.480" stop-color="#2200dd"/><stop offset="0.837" stop-color="#1e00e1"/><stop offset="0.943" stop-color="#2f00d0"/><stop offset="1.000" stop-color="#1400eb"/></linearGradient><linearGradient id="g87"><stop offset="0.000" stop-color="#1f00e0"/><stop offset="0.026" stop-color="#3300cc"/><stop offset="0.041" stop-color="#4000bf"/><stop offset="0.069" stop-color="#3900c6"/><stop offset="0.086" stop-color="#5a00a5"/><stop offset="0.106" stop-color="#980067"/><stop offset="0.117" stop-color="#8f0070"/><stop offset="0.143" stop-color="#3a00c5"/><stop offset="0.160" stop-color="#2f00d0"/><stop offset="0.194" stop-color="#5900a6"/><stop offset="0.221" stop-color="#3900c6"/><stop offset="0.250" stop-color="#2400db"/><stop offset="0.313" stop-color="#3400cb"/><stop offset="0.324" stop-color="#5c00a3"/><stop offset="0.336" stop-color="#94006b"/><stop offset="0.343" stop-color="#92006d"/><stop offset="0.361" stop-color="#3f00c0"/><stop offset="0.389" stop-color="#2400db"/><stop offset="0.426" stop-color="#2500da"/><stop offset="0.464" stop-color="#2800d7"/><stop offset="0.513" stop-color="#1c00e3"/><stop offset="0.763" stop-color="#2100de"/><stop offset="0.901" stop-color="#1600e9"/><stop offset="1.000" stop-color="#1a00e6"/></linearGradient><linearGradient id="g88"><stop offset="0.000" stop-color="#1f00e0"/><stop offset="0.024" stop-color="#2c00d3"/><stop offset="0.039" stop-color="#3800c7"/><stop offset="0.061" stop-color="#1e00e1"/><stop offset="0.081" stop-color="#3100ce"/><stop offset="0.107" stop-color="#6e0091"/><stop offset="0.121" stop-color="#63009c"/><stop offset="0.146" stop-color="#3700c8"/><stop offset="0.164" stop-color="#4300bc"/><stop offset="0.190" stop-color="#6d0092"/><stop offset="0.207" stop-color="#5700a8"/><stop offset="0.234" stop-color="#1e00e1"/><stop offset="0.266" stop-color="#1b00e4"/><stop offset="0.310" stop-color="#2f00d0"/><stop offset="0.321" stop-color="#5700a8"/><stop offset="0.336" stop-color="#ad0052"/><stop offset="0.343" stop-color="#ad0052"/><stop offset="0.361" stop-color="#5200ad"/><stop offset="0.384" stop-color="#3000cf"/><stop offset="0.424" stop-color="#2300dc"/><stop offset="0.489" stop-color="#1300ec"/><stop offset="0.743" stop-color="#2c00d3"/><stop offset="1.000" stop-color="#1400eb"/></linearGradient><linearGradient id="g89"><stop offset="0.000" stop-color="#1400eb"/><stop offset="0.040" stop-color="#2e00d1"/><stop offset="0.064" stop-color="#2400db"/><stop offset="0.090" stop-color="#4800b7"/><stop offset="0.109" stop-color="#60009f"/><stop offset="0.130" stop-color="#4100be"/><stop offset="0.151" stop-color="#2800d7"/><stop offset="0.193" stop-color="#4300bc"/><stop offset="0.233" stop-color="#1800e7"/><stop offset="0.309" stop-color="#3d00c2"/><stop offset="0.319" stop-color="#5d00a2"/><stop offset="0.334" stop-color="#c70038"/><stop offset="0.340" stop-color="#d0002f"/><stop offset="0.347" stop-color="#af0050"/><stop offset="0.360" stop-color="#5600a9"/><stop offset="0.374" stop-color="#2e00d1"/><stop offset="0.404" stop-color="#1800e7"/><stop offset="0.484" stop-color="#2200dd"/><stop offset="0.519" stop-color="#2800d7"/><stop offset="0.577" stop-color="#1600e9"/><stop offset="0.763" stop-color="#3100ce"/><stop offset="0.853" stop-color="#4800b7"/><stop offset="0.911" stop-color="#1500ea"/><stop offset="1.000" stop-color="#1a00e6"/></linearGradient><linearGradient id="g90"><stop offset="0.000" stop-color="#2400db"/><stop offset="0.039" stop-color="#4200bd"/><stop offset="0.059" stop-color="#2b00d4"/><stop offset="0.080" stop-color="#4000bf"/><stop offset="0.104" stop-color="#74008b"/><stop offset="0.117" stop-color="#670098"/><stop offset="0.141" stop-color="#2900d6"/><stop offset="0.170" stop-color="#2400db"/><stop offset="0.241" stop-color="#2800d7"/><stop offset="0.307" stop-color="#2c00d3"/><stop offset="0.319" stop-color="#4900b6"/><stop offset="0.336" stop-color="#a80057"/><stop offset="0.343" stop-color="#a4005b"/><stop offset="0.361" stop-color="#3e00c1"/><stop offset="0.377" stop-color="#2400db"/><stop offset="0.446" stop-color="#2600d9"/><stop offset="0.601" stop-color="#2700d8"/><stop offset="0.766" stop-color="#3800c7"/><stop offset="0.859" stop-color="#4900b6"/><stop offset="1.000" stop-color="#1400eb"/></linearGradient><linearGradient id="g91"><stop offset="0.000" stop-color="#2800d7"/><stop offset="0.023" stop-color="#3000cf"/><stop offset="0.037" stop-color="#4400bb"/><stop offset="0.056" stop-color="#2400db"/><stop offset="0.073" stop-color="#3c00c3"/><stop offset="0.090" stop-color="#80007f"/><stop offset="0.104" stop-color="#b80047"/><stop offset="0.114" stop-color="#b3004c"/><stop offset="0.140" stop-color="#5000af"/><stop offset="0.161" stop-color="#3b00c4"/><stop offset="0.227" stop-color="#1d00e2"/><stop offset="0.294" stop-color="#1d00e2"/><stop offset="0.313" stop-color="#3a00c5"/><stop offset="0.324" stop-color="#72008d"/><stop offset="0.334" stop-color="#af0050"/><stop offset="0.341" stop-color="#b4004b"/><stop offset="0.353" stop-color="#75008a"/><stop offset="0.364" stop-color="#4200bd"/><stop offset="0.387" stop-color="#2e00d1"/><stop offset="0.440" stop-color="#1a00e5"/><stop offset="0.480" stop-color="#1800e7"/><stop offset="0.773" stop-color="#3000cf"/><stop offset="0.863" stop-color="#3c00c3"/><stop offset="1.000" stop-color="#1400eb"/></linearGradient><linearGradient id="g92"><stop offset="0.000" stop-color="#1c00e3"/><stop offset="0.023" stop-color="#2600d9"/><stop offset="0.039" stop-color="#3e00c1"/><stop offset="0.056" stop-color="#3500ca"/><stop offset="0.074" stop-color="#5e00a1"/><stop offset="0.090" stop-color="#af0050"/><stop offset="0.103" stop-color="#f0000f"/><stop offset="0.111" stop-color="#f4000b"/><stop offset="0.121" stop-color="#c90036"/><stop offset="0.139" stop-color="#670098"/><stop offset="0.154" stop-color="#4000bf"/><stop offset="0.203" stop-color="#1400eb"/><stop offset="0.296" stop-color="#2c00d3"/><stop offset="0.319" stop-color="#4d00b2"/><stop offset="0.336" stop-color="#860079"/><stop offset="0.344" stop-color="#7a0085"/><stop offset="0.361" stop-color="#3400cb"/><stop offset="0.383" stop-color="#2000df"/><stop offset="0.453" stop-color="#1700e8"/><stop offset="0.497" stop-color="#2800d7"/><stop offset="1.000" stop-color="#1400eb"/></linearGradient><linearGradient id="g93"><stop offset="0.000" stop-color="#2900d6"/><stop offset="0.020" stop-color="#3300cc"/><stop offset="0.036" stop-color="#64009b"/><stop offset="0.056" stop-color="#4400bb"/><stop offset="0.073" stop-color="#62009d"/><stop offset="0.086" stop-color="#9f0060"/><stop offset="0.100" stop-color="#fa0005"/><stop offset="0.110" stop-color="#ff0f00"/><stop offset="0.117" stop-color="#f5000a"/><stop offset="0.139" stop-color="#6b0094"/><stop offset="0.153" stop-color="#4000bf"/><stop offset="0.191" stop-color="#2200dd"/><stop offset="0.249" stop-color="#2a00d5"/><stop offset="0.293" stop-color="#2300dc"/><stop offset="0.321" stop-color="#3700c8"/><stop offset="0.339" stop-color="#5100ae"/><stop offset="0.363" stop-color="#2500da"/><stop offset="0.384" stop-color="#3a00c5"/><stop offset="0.414" stop-color="#6f0090"/><stop offset="0.434" stop-color="#61009e"/><stop offset="0.469" stop-color="#3200cd"/><stop offset="0.517" stop-color="#1800e7"/><stop offset="1.000" stop-color="#1400eb"/></linearGradient><linearGradient id="g94"><stop offset="0.000" stop-color="#2600d9"/><stop offset="0.019" stop-color="#2800d7"/><stop offset="0.036" stop-color="#62009d"/><stop offset="0.047" stop-color="#4700b8"/><stop offset="0.059" stop-color="#3c00c3"/><stop offset="0.074" stop-color="#60009f"/><stop offset="0.086" stop-color="#a2005d"/><stop offset="0.097" stop-color="#fd0002"/><stop offset="0.106" stop-color="#ff2a00"/><stop offset="0.113" stop-color="#ff2a00"/><stop offset="0.121" stop-color="#fc0003"/><stop offset="0.139" stop-color="#84007b"/><stop offset="0.153" stop-color="#5300ac"/><stop offset="0.187" stop-color="#2c00d3"/><stop offset="0.253" stop-color="#1500ea"/><stop offset="0.290" stop-color="#1b00e4"/><stop offset="0.329" stop-color="#3900c6"/><stop offset="0.344" stop-color="#3f00c0"/><stop offset="0.366" stop-color="#3300cc"/><stop offset="0.416" stop-color="#770088"/><stop offset="0.436" stop-color="#60009f"/><stop offset="0.469" stop-color="#2500da"/><stop offset="0.506" stop-color="#1300ec"/><stop offset="0.831" stop-color="#1400eb"/><stop offset="1.000" stop-color="#0f00f0"/></linearGradient><linearGradient id="g95"><stop offset="0.000" stop-color="#1500ea"/><stop offset="0.019" stop-color="#2000df"/><stop offset="0.036" stop-color="#5e00a1"/><stop offset="0.056" stop-color="#4500ba"/><stop offset="0.071" stop-color="#61009e"/><stop offset="0.083" stop-color="#9b0064"/><stop offset="0.096" stop-color="#ff0400"/><stop offset="0.104" stop-color="#ff3900"/><stop offset="0.111" stop-color="#ff3f00"/><stop offset="0.120" stop-color="#ff1500"/><stop offset="0.123" stop-color="#fe0001"/><stop offset="0.139" stop-color="#85007a"/><stop offset="0.151" stop-color="#4d00b2"/><stop offset="0.176" stop-color="#2500da"/><stop offset="0.263" stop-color="#1c00e3"/><stop offset="0.324" stop-color="#3e00c1"/><stop offset="0.340" stop-color="#4f00b0"/><stop offset="0.366" stop-color="#3000cf"/><stop offset="0.391" stop-color="#4b00b4"/><stop offset="0.419" stop-color="#770088"/><stop offset="0.437" stop-color="#65009a"/><stop offset="0.470" stop-color="#2c00d3"/><stop offset="0.509" stop-color="#2300dc"/><stop offset="1.000" stop-color="#0f00f0"/></linearGradient><linearGradient id="g96"><stop offset="0.000" stop-color="#2000df"/><stop offset="0.019" stop-color="#3100ce"/><stop offset="0.036" stop-color="#6d0092"/><stop offset="0.047" stop-color="#5400ab"/><stop offset="0.060" stop-color="#4600b9"/><stop offset="0.074" stop-color="#5f00a0"/><stop offset="0.086" stop-color="#9a0065"/><stop offset="0.100" stop-color="#ff0000"/><stop offset="0.109" stop-color="#ff1a00"/><stop offset="0.116" stop-color="#ff0a00"/><stop offset="0.120" stop-color="#f0000f"/><stop offset="0.139" stop-color="#6c0093"/><stop offset="0.151" stop-color="#3c00c3"/><stop offset="0.174" stop-color="#2700d8"/><stop offset="0.233" stop-color="#2600d9"/><stop offset="0.320" stop-color="#2600d9"/><stop offset="0.340" stop-color="#4300bc"/><stop offset="0.367" stop-color="#2c00d3"/><stop offset="0.393" stop-color="#4b00b4"/><stop offset="0.419" stop-color="#7a0085"/><stop offset="0.436" stop-color="#70008f"/><stop offset="0.476" stop-color="#2600d9"/><stop offset="0.513" stop-color="#1c00e3"/><stop offset="1.000" stop-color="#0f00f0"/></linearGradient><linearGradient id="g97"><stop offset="0.000" stop-color="#2000df"/><stop offset="0.019" stop-color="#2b00d4"/><stop offset="0.034" stop-color="#63009c"/><stop offset="0.041" stop-color="#5800a7"/><stop offset="0.054" stop-color="#2e00d1"/><stop offset="0.070" stop-color="#3400cb"/><stop offset="0.084" stop-color="#64009b"/><stop offset="0.103" stop-color="#c4003b"/><stop offset="0.111" stop-color="#ce0031"/><stop offset="0.123" stop-color="#a80057"/><stop offset="0.141" stop-color="#5300ac"/><stop offset="0.160" stop-color="#3500ca"/><stop offset="0.217" stop-color="#2200dd"/><stop offset="0.256" stop-color="#1700e8"/><stop offset="0.319" stop-color="#2400db"/><stop offset="0.341" stop-color="#4700b8"/><stop offset="0.403" stop-color="#2100de"/><stop offset="0.459" stop-color="#1800e7"/><stop offset="0.493" stop-color="#1500ea"/><stop offset="0.737" stop-color="#1a00e5"/><stop offset="1.000" stop-color="#0f00f0"/></linearGradient><linearGradient id="g98"><stop offset="0.000" stop-color="#1400eb"/><stop offset="0.019" stop-color="#2600d9"/><stop offset="0.034" stop-color="#660099"/><stop offset="0.041" stop-color="#5a00a5"/><stop offset="0.053" stop-color="#2d00d2"/><stop offset="0.069" stop-color="#2c00d3"/><stop offset="0.091" stop-color="#5b00a4"/><stop offset="0.107" stop-color="#780087"/><stop offset="0.121" stop-color="#65009a"/><stop offset="0.146" stop-color="#2c00d3"/><stop offset="0.231" stop-color="#1400eb"/><stop offset="0.287" stop-color="#2900d6"/><stop offset="0.317" stop-color="#3200cd"/><stop offset="0.339" stop-color="#5800a7"/><stop offset="0.376" stop-color="#1e00e1"/><stop offset="0.411" stop-color="#1700e8"/><stop offset="0.486" stop-color="#2300dc"/><stop offset="0.596" stop-color="#3000cf"/><stop offset="0.917" stop-color="#3a00c5"/><stop offset="1.000" stop-color="#1400eb"/></linearGradient><linearGradient id="g99"><stop offset="0.000" stop-color="#2400db"/><stop offset="0.019" stop-color="#3800c7"/><stop offset="0.034" stop-color="#7d0082"/><stop offset="0.040" stop-color="#72008d"/><stop offset="0.053" stop-color="#2f00d0"/><stop offset="0.069" stop-color="#2400db"/><stop offset="0.110" stop-color="#3400cb"/><stop offset="0.147" stop-color="#1700e8"/><stop offset="0.204" stop-color="#2100de"/><stop offset="0.273" stop-color="#2800d7"/><stop offset="0.310" stop-color="#2300dc"/><stop offset="0.326" stop-color="#4500ba"/><stop offset="0.339" stop-color="#63009c"/><stop offset="0.351" stop-color="#4600b9"/><stop offset="0.367" stop-color="#2200dd"/><stop offset="0.400" stop-color="#2200dd"/><stop offset="0.441" stop-color="#2800d7"/><stop offset="0.534" stop-color="#2500da"/><stop offset="0.907" stop-color="#5600a9"/><stop offset="0.937" stop-color="#1900e6"/><stop offset="1.000" stop-color="#1400eb"/></linearGradient></defs><rect x="106" y="72" width="700" height="8" fill="url(#g0)"/><rect x="106" y="80" width="700" height="7" fill="url(#g1)"/><rect x="106" y="87" width="700" height="8" fill="url(#g2)"/><rect x="106" y="95" width="700" height="8" fill="url(#g3)"/><rect x="106" y="103" width="700" height="8" fill="url(#g4)"/><rect x="106" y="111" width="700" height="7" fill="url(#g5)"/><rect x="106" y="118" width="700" height="8" fill="url(#g6)"/><rect x="106" y="126" width="700" height="8" fill="url(#g7)"/><rect x="106" y="134" width="700" height="8" fill="url(#g8)"/><rect x="106" y="142" width="700" height="7" fill="url(#g9)"/><rect x="106" y="149" width="700" height="8" fill="url(#g10)"/><rect x="106" y="157" width="700" height="8" fill="url(#g11)"/><rect x="106" y="165" width="700" height="7" fill="url(#g12)"/><rect x="106" y="172" width="700" height="8" fill="url(#g13)"/><rect x="106" y="180" width="700" height="8" fill="url(#g14)"/><rect x="106" y="188" width="700" height="8" fill="url(#g15)"/><rect x="106" y="196" width="700" height="7" fill="url(#g16)"/><rect x="106" y="203" width="700" height="8" fill="url(#g17)"/><rect x="106" y="211" width="700" height="8" fill="url(#g18)"/><rect x="106" y="219" width="700" height="8" fill="url(#g19)"/><rect x="106" y="227" width="700" height="7" fill="url(#g20)"/><rect x="106" y="234" width="700" height="8" fill="url(#g21)"/><rect x="106" y="242" width="700" height="8" fill="url(#g22)"/><rect x="106" y="250" width="700" height="8" fill="url(#g23)"/><rect x="106" y="258" width="700" height="7" fill="url(#g24)"/><rect x="106" y="265" width="700" height="8" fill="url(#g25)"/><rect x="106" y="273" width="700" height="8" fill="url(#g26)"/><rect x="106" y="281" width="700" height="7" fill="url(#g27)"/><rect x="106" y="288" width="700" height="8" fill="url(#g28)"/><rect x="106" y="296" width="700" height="8" fill="url(#g29)"/><rect x="106" y="304" width="700" height="8" fill="url(#g30)"/><rect x="106" y="312" width="700" height="7" fill="url(#g31)"/><rect x="106" y="319" width="700" height="8" fill="url(#g32)"/><rect x="106" y="327" width="700" height="8" fill="url(#g33)"/><rect x="106" y="335" width="700" height="8" fill="url(#g34)"/><rect x="106" y="343" width="700" height="7" fill="url(#g35)"/><rect x="106" y="350" width="700" height="8" fill="url(#g36)"/><rect x="106" y="358" width="700" height="8" fill="url(#g37)"/><rect x="106" y="366" width="700" height="7" fill="url(#g38)"/><rect x="106" y="373" width="700" height="8" fill="url(#g39)"/><rect x="106" y="381" width="700" height="8" fill="url(#g40)"/><rect x="106" y="389" width="700" height="8" fill="url(#g41)"/><rect x="106" y="397" width="700" height="7" fill="url(#g42)"/><rect x="106" y="404" width="700" height="8" fill="url(#g43)"/><rect x="106" y="412" width="700" height="8" fill="url(#g44)"/><rect x="106" y="420" width="700" height="8" fill="url(#g45)"/><rect x="106" y="428" width="700" height="7" fill="url(#g46)"/><rect x="106" y="435" width="700" height="8" fill="url(#g47)"/><rect x="106" y="443" width="700" height="8" fill="url(#g48)"/><rect x="106" y="451" width="700" height="8" fill="url(#g49)"/><rect x="106" y="458" width="700" height="8" fill="url(#g50)"/><rect x="106" y="466" width="700" height="8" fill="url(#g51)"/><rect x="106" y="474" width="700" height="8" fill="url(#g52)"/><rect x="106" y="482" width="700" height="7" fill="url(#g53)"/><rect x="106" y="489" width="700" height="8" fill="url(#g54)"/><rect x="106" y="497" width="700" height="8" fill="url(#g55)"/><rect x="106" y="505" width="700" height="8" fill="url(#g56)"/><rect x="106" y="513" width="700" height="7" fill="url(#g57)"/><rect x="106" y="520" width="700" height="8" fill="url(#g58)"/><rect x="106" y="528" width="700" height="8" fill="url(#g59)"/><rect x="106" y="536" width="700" height="8" fill="url(#g60)"/><rect x="106" y="544" width="700" height="7" fill="url(#g61)"/><rect x="106" y="551" width="700" height="8" fill="url(#g62)"/><rect x="106" y="559" width="700" height="8" fill="url(#g63)"/><rect x="106" y="567" width="700" height="7" fill="url(#g64)"/><rect x="106" y="574" width="700" height="8" fill="url(#g65)"/><rect x="106" y="582" width="700" height="8" fill="url(#g66)"/><rect x="106" y="590" width="700" height="8" fill="url(#g67)"/><rect x="106" y="598" width="700" height="7" fill="url(#g68)"/><rect x="106" y="605" width="700" height="8" fill="url(#g69)"/><rect x="106" y="613" width="700" height="8" fill="url(#g70)"/><rect x="106" y="621" width="700" height="8" fill="url(#g71)"/><rect x="106" y="629" width="700" height="7" fill="url(#g72)"/><rect x="106" y="636" width="700" height="8" fill="url(#g73)"/><rect x="106" y="644" width="700" height="8" fill="url(#g74)"/><rect x="106" y="652" width="700" height="7" fill="url(#g75)"/><rect x="106" y="659" width="700" height="8" fill="url(#g76)"/><rect x="106" y="667" width="700" height="8" fill="url(#g77)"/><rect x="106" y="675" width="700" height="8" fill="url(#g78)"/><rect x="106" y="683" width="700" height="7" fill="url(#g79)"/><rect x="106" y="690" width="700" height="8" fill="url(#g80)"/><rect x="106" y="698" width="700" height="8" fill="url(#g81)"/><rect x="106" y="706" width="700" height="8" fill="url(#g82)"/><rect x="106" y="714" width="700" height="7" fill="url(#g83)"/><rect x="106" y="721" width="700" height="8" fill="url(#g84)"/><rect x="106" y="729" width="700" height="8" fill="url(#g85)"/><rect x="106" y="737" width="700" height="8" fill="url(#g86)"/><rect x="106" y="745" width="700" height="7" fill="url(#g87)"/><rect x="106" y="752" width="700" height="8" fill="url(#g88)"/><rect x="106" y="760" width="700" height="8" fill="url(#g89)"/><rect x="106" y="768" width="700" height="7" fill="url(#g90)"/><rect x="106" y="775" width="700" height="8" fill="url(#g91)"/><rect x="106" y="783" width="700" height="8" fill="url(#g92)"/><rect x="106" y="791" width="700" height="8" fill="url(#g93)"/><rect x="106" y="799" width="700" height="7" fill="url(#g94)"/><rect x="106" y="806" width="700" height="8" fill="url(#g95)"/><rect x="106" y="814" width="700" height="8" fill="url(#g96)"/><rect x="106" y="822" width="700" height="8" fill="url(#g97)"/><rect x="106" y="830" width="700" height="7" fill="url(#g98)"/><rect x="106" y="837" width="700" height="8" fill="url(#g99)"/>
  <path d="M843.4,72.9 C843.0,76.1 837.5,83.6 840.7,92.2 C843.9,100.8 866.8,114.6 862.8,124.5 C858.8,134.4 817.9,143.4 817.0,151.6 C816.1,159.8 855.5,166.9 857.7,173.7 C860.0,180.5 830.8,186.4 830.5,192.3 C830.2,198.2 856.9,203.6 856.0,209.3 C855.1,215.0 826.8,221.5 825.4,226.3 C824.0,231.1 847.2,233.9 847.5,238.1 C847.8,242.3 824.0,247.2 827.1,251.7 C830.2,256.2 861.1,261.6 866.2,265.3 C871.3,269.0 854.5,270.0 857.7,273.8 C860.9,277.6 890.0,283.5 885.5,288.0 C881.0,292.5 841.6,297.4 830.5,301.0 C819.4,304.6 801.2,305.4 818.7,309.4 C836.2,313.3 916.8,321.0 935.7,324.7 C954.6,328.4 931.6,329.5 932.3,331.5 C933.0,333.5 953.4,333.5 939.8,336.6 C926.2,339.7 862.4,345.3 850.9,350.1 C839.4,354.9 874.9,360.6 870.6,365.4 C866.4,370.2 831.2,374.8 825.4,379.0 C819.6,383.2 837.9,388.0 835.6,390.8 C833.4,393.6 808.3,393.6 811.9,396.0 C815.5,398.4 856.7,402.3 857.0,405.4 C857.3,408.5 815.5,410.5 813.6,414.6 C811.7,418.7 845.8,426.1 845.8,429.9 C845.8,433.7 810.6,434.5 813.6,437.3 C816.6,440.1 860.1,443.3 863.8,446.8 C867.5,450.3 841.4,454.0 835.6,458.5 C829.8,463.0 826.9,468.6 828.8,473.8 C830.7,479.1 850.2,485.2 846.8,490.0 C843.4,494.8 807.0,496.3 808.5,502.6 C810.0,508.9 851.3,522.0 856.0,528.0 C860.7,534.0 840.6,533.8 836.6,538.9 C832.6,544.0 837.2,552.5 832.2,558.6 C827.2,564.7 805.3,570.2 806.8,575.6 C808.3,581.0 838.9,586.0 841.4,590.8 C843.9,595.6 827.1,600.4 822.0,604.4 C816.9,608.4 809.8,610.9 810.9,614.6 C812.0,618.3 827.1,622.3 828.8,626.5 C830.5,630.7 821.0,635.8 821.0,640.0 C821.0,644.2 831.0,648.4 828.8,651.9 C826.5,655.4 808.6,657.9 807.5,661.0 C806.4,664.1 821.0,667.3 822.0,670.6 C823.0,673.9 812.6,677.3 813.6,680.7 C814.6,684.1 827.7,687.3 827.8,691.0 C827.9,694.7 815.5,698.3 814.3,702.8 C813.1,707.3 819.7,713.2 820.4,718.0 C821.1,722.8 818.4,727.1 818.7,731.6 C819.0,736.1 823.7,740.1 822.0,745.2 C820.3,750.3 809.3,757.1 808.5,762.2 C807.7,767.3 817.2,770.1 817.0,775.8 C816.8,781.4 808.9,788.2 807.5,796.1 C806.1,804.0 808.0,815.1 808.5,823.3 C809.0,831.5 809.9,841.6 810.2,845.3" fill="none" stroke="#000" stroke-width="1.1"/>
  <g stroke="#000" stroke-width="1.3">
   <line x1="89" y1="138" x2="106" y2="138"/><line x1="89" y1="256" x2="106" y2="256"/>
   <line x1="89" y1="352" x2="106" y2="352"/><line x1="89" y1="470" x2="106" y2="470"/>
   <line x1="89" y1="580" x2="106" y2="580"/><line x1="89" y1="661" x2="106" y2="661"/>
   <line x1="89" y1="735.5" x2="106" y2="735.5"/><line x1="89" y1="779" x2="106" y2="779"/>
   <line x1="146.6" y1="846" x2="146.6" y2="856"/><line x1="232.5" y1="846" x2="232.5" y2="856"/>
   <line x1="319.4" y1="846" x2="319.4" y2="856"/><line x1="405.7" y1="846" x2="405.7" y2="856"/>
   <line x1="491.4" y1="846" x2="491.4" y2="866"/><line x1="577.3" y1="846" x2="577.3" y2="856"/>
   <line x1="663.3" y1="846" x2="663.3" y2="856"/><line x1="749.6" y1="846" x2="749.6" y2="856"/>
  </g>
  <g font-size="26" text-anchor="end" fill="#000">
   <text x="89" y="148">2y</text><text x="89" y="266">1y</text><text x="89" y="362">200d</text>
   <text x="89" y="480">100d</text><text x="89" y="590">50d</text><text x="89" y="671">30d</text>
   <text x="89" y="745.5">20d</text><text x="89" y="789">15d</text>
  </g>
  </svg>
  <div class="a" style="left:0;top:1047px;width:951px;height:1px;background:#d7d7d7"></div>
  <div class="a" style="left:0;top:1048px;width:951px;height:23px;background:#f0f0f0"></div>
  <div class="t" style="left:4px;top:1050px;font-size:22.5px;">1005.72 d</div>
  <div class="t" style="left:137px;top:1050px;font-size:22px;">18.11.2012</div>
  <div class="t" style="left:263px;top:1050px;font-size:22px;">20:01</div>
</div>

<!-- right panel -->
<div id="panel" class="a">
  <div class="a" style="left:0;top:0;width:2px;height:1073px;background:#a0a0a0"></div>
  <div class="a" style="left:2px;top:0;width:1px;height:1073px;background:#fff"></div>
  <div class="a" style="left:332px;top:0;width:2px;height:1073px;background:#a8a8a8"></div>
  <div class="a" style="left:334px;top:0;width:3px;height:1073px;background:#1883d7"></div>

  <div class="btn" style="left:18px;top:-10px;width:304px;height:62px;"></div>
  <svg width="335" height="40" viewBox="0 0 335 40"><line x1="132.5" y1="8.8" x2="135.8" y2="8.8" stroke="#ff0" stroke-width="1.3"/><line x1="132.5" y1="10.4" x2="135.8" y2="10.4" stroke="#000" stroke-width="1.3"/><line x1="131.5" y1="12.9" x2="133.8" y2="15.3" stroke="#ff0" stroke-width="1.3"/><line x1="130.3" y1="14.1" x2="132.7" y2="16.4" stroke="#000" stroke-width="1.3"/><line x1="127.8" y1="15.1" x2="127.8" y2="18.4" stroke="#ff0" stroke-width="1.3"/><line x1="126.2" y1="15.1" x2="126.2" y2="18.4" stroke="#000" stroke-width="1.3"/><line x1="123.7" y1="14.1" x2="121.3" y2="16.4" stroke="#ff0" stroke-width="1.3"/><line x1="122.5" y1="12.9" x2="120.2" y2="15.3" stroke="#000" stroke-width="1.3"/><line x1="121.5" y1="10.4" x2="118.2" y2="10.4" stroke="#ff0" stroke-width="1.3"/><line x1="121.5" y1="8.8" x2="118.2" y2="8.8" stroke="#000" stroke-width="1.3"/><line x1="122.5" y1="6.3" x2="120.2" y2="3.9" stroke="#ff0" stroke-width="1.3"/><line x1="123.7" y1="5.1" x2="121.3" y2="2.8" stroke="#000" stroke-width="1.3"/><line x1="126.2" y1="4.1" x2="126.2" y2="0.8" stroke="#ff0" stroke-width="1.3"/><line x1="127.8" y1="4.1" x2="127.8" y2="0.8" stroke="#000" stroke-width="1.3"/><line x1="130.3" y1="5.1" x2="132.7" y2="2.8" stroke="#ff0" stroke-width="1.3"/><line x1="131.5" y1="6.3" x2="133.8" y2="3.9" stroke="#000" stroke-width="1.3"/><circle cx="127.6" cy="10.2" r="4.3" fill="#000"/><circle cx="126.7" cy="9.3" r="4" fill="#ff0"/></svg>
  <div class="t" style="left:140px;top:2px;font-size:19.5px;">Calculate</div>

  <div class="sep" style="top:60px"></div><div class="sepw" style="top:61px"></div>
  <div class="gl" style="left:241px;top:73px;width:91px"></div>
  <div class="gl" style="left:3px;top:73px;width:8px"></div><div class="a" style="left:3px;top:73px;width:1px;height:194px;background:#dcdcdc"></div>
  <div class="t f21" style="left:11px;top:64px;">Period Frame/Algorithm</div>

  <div class="t f21" style="left:37px;top:105px;">Min=</div>
  <div class="spin" style="left:91px;top:97px;width:76px;height:36px;"></div>
  <div class="t f21" style="left:95px;top:102px;">10</div>
  <div class="a" style="left:133px;top:101px;width:1px;height:24px;background:#ccc"></div>
  <div class="sb" style="left:135px;top:100px;width:29px;height:13px;"></div>
  <div class="sb" style="left:135px;top:115px;width:29px;height:14px;"></div>
  <div class="a" style="left:145px;top:103px;width:0;height:0;border-left:4px solid transparent;border-right:4px solid transparent;border-bottom:5px solid #000"></div>
  <div class="a" style="left:145px;top:120px;width:0;height:0;border-left:4px solid transparent;border-right:4px solid transparent;border-top:5px solid #000"></div>
  <div class="t f21" style="left:173px;top:105px;">bars</div>

  <div class="t f21" style="left:35px;top:161px;">Max=</div>
  <div class="spin" style="left:91px;top:151px;width:115px;height:36px;"></div>
  <div class="t f21" style="left:95px;top:156px;">3</div>
  <div class="a" style="left:172px;top:155px;width:1px;height:24px;background:#ccc"></div>
  <div class="sb" style="left:173px;top:154px;width:29px;height:13px;"></div>
  <div class="sb" style="left:173px;top:168px;width:29px;height:15px;"></div>
  <div class="a" style="left:183px;top:157px;width:0;height:0;border-left:4px solid transparent;border-right:4px solid transparent;border-bottom:5px solid #000"></div>
  <div class="a" style="left:183px;top:173px;width:0;height:0;border-left:4px solid transparent;border-right:4px solid transparent;border-top:5px solid #000"></div>
  <div class="combo" style="left:209px;top:151px;width:92px;height:33px;"></div>
  <div class="t f21" style="left:213px;top:156px;">y</div>

  <div class="combo" style="left:23px;top:207px;width:290px;height:33px;"></div>
  <div class="t f21" style="left:27px;top:213px;">Smoothed</div>

  <div class="sep" style="top:267px"></div><div class="sepw" style="top:268px"></div>
  <div class="gl" style="left:60px;top:281px;width:272px"></div>
  <div class="gl" style="left:3px;top:281px;width:8px"></div><div class="a" style="left:3px;top:281px;width:1px;height:298px;background:#dcdcdc"></div>
  <div class="t f21" style="left:11px;top:272px;">View</div>

  <div class="t f21" style="left:33px;top:308px;">Quality</div>
  <div class="spin" style="left:101px;top:299px;width:84px;height:36px;"></div>
  <div class="t f21" style="left:105px;top:305px;">100</div>
  <div class="a" style="left:152px;top:303px;width:1px;height:24px;background:#ccc"></div>
  <div class="sb" style="left:153px;top:302px;width:29px;height:13px;"></div>
  <div class="sb" style="left:153px;top:316px;width:29px;height:15px;"></div>
  <div class="a" style="left:163px;top:305px;width:0;height:0;border-left:4px solid transparent;border-right:4px solid transparent;border-bottom:5px solid #000"></div>
  <div class="a" style="left:163px;top:321px;width:0;height:0;border-left:4px solid transparent;border-right:4px solid transparent;border-top:5px solid #000"></div>
  <div class="combo" style="left:189px;top:299px;width:138px;height:33px;"></div>
  <div class="t f21" style="left:193px;top:306px;">Amplitude</div>

  <div class="combo" style="left:27px;top:353px;width:296px;height:33px;"></div>
  <div class="t f21" style="left:31px;top:360px;">blue-red-yellow</div>

  <div class="cb" style="left:13px;top:408px;"></div>
  <div class="t f21" style="left:45px;top:411px;">Show Cycles</div>
  <div class="cb" style="left:13px;top:448px;"></div>
  <div class="t f21" style="left:45px;top:451px;">Maxima Skeleton</div>
  <div class="cb" style="left:13px;top:493px;"></div>
  <div class="t f21" style="left:45px;top:496px;">Price Chart</div>

  <div class="btn" style="left:30px;top:526px;width:286px;height:46px;"></div>
  <div class="t f21" style="left:105px;top:540px;">Hide spectrum</div>

  <div class="sep" style="top:579px"></div><div class="sepw" style="top:580px"></div>
  <div class="gl" style="left:63px;top:594px;width:269px"></div>
  <div class="gl" style="left:3px;top:594px;width:8px"></div><div class="a" style="left:3px;top:594px;width:1px;height:63px;background:#dcdcdc"></div>
  <div class="t f21" style="left:11px;top:584px;">Filter</div>
  <div class="a" style="left:20px;top:613px;width:222px;height:12px;background:#e7eaea;border:1px solid #d6d6d6"></div>
  <div class="a" style="left:148px;top:612px;width:9px;height:11px;background:#0078d7;"></div>
  <div class="a" style="left:148px;top:623px;width:0;height:0;border-left:4.5px solid transparent;border-right:4.5px solid transparent;border-top:4px solid #0078d7"></div>
  <div class="a" style="left:24px;top:630px;width:1px;height:4px;background:#bbb"></div>
  <div class="a" style="left:237px;top:630px;width:1px;height:4px;background:#bbb"></div>
  <div class="btn" style="left:258px;top:604px;width:58px;height:44px;"></div>
  <div class="t f21" style="left:272px;top:617px;">OK</div>

  <div class="sep" style="top:657px"></div><div class="sepw" style="top:658px"></div>
  <div class="gl" style="left:104px;top:671px;width:228px"></div>
  <div class="gl" style="left:3px;top:671px;width:8px"></div><div class="a" style="left:3px;top:671px;width:1px;height:400px;background:#dcdcdc"></div>
  <div class="t" style="left:12px;top:662px;font-size:19.6px">Cycle Box</div>

  <div class="a" style="left:5px;top:687px;width:326px;height:1px;background:#fff"></div>
  <div class="a" style="left:330px;top:687px;width:1px;height:52px;background:#a0a0a0"></div>
  <div class="btn" style="left:8px;top:690px;width:52px;height:46px;"></div>
  <div class="a" style="left:28px;top:711px;width:11px;height:3px;border:1px solid #000;background:#fff"></div>
  <div class="btn" style="left:62px;top:690px;width:50px;height:46px;"></div>
  <svg width="335" height="1073" viewBox="0 0 335 1073">
   <line x1="87" y1="716" x2="91" y2="711.5" stroke="#f00" stroke-width="4"/>
   <line x1="90.5" y1="712" x2="95.5" y2="706" stroke="#ff0" stroke-width="4"/>
   <line x1="89" y1="711" x2="94" y2="705" stroke="#000" stroke-width="1" stroke-dasharray="1 1"/>
   <ellipse cx="82" cy="717.5" rx="3.2" ry="2.6" fill="none" stroke="#000" stroke-width="2.2"/>
   <line x1="85.5" y1="714" x2="85.5" y2="720.5" stroke="#000" stroke-width="2"/>
   <path d="M78.5,713 Q81,710 84,712" fill="none" stroke="#000" stroke-width="2"/>
   <rect x="78" y="706" width="1.6" height="1.6" fill="#000"/><rect x="79.5" y="709" width="1.6" height="1.6" fill="#000"/>
   <rect x="88" y="719" width="1.5" height="1.5" fill="#000"/><rect x="86" y="717" width="1.5" height="1.5" fill="#000"/>
  </svg>
  <div class="btn" style="left:118px;top:690px;width:68px;height:46px;"></div>
  <div class="t" style="left:139px;top:706px;font-size:12px;color:#ff00ff">wave</div>
  <div class="t f21" style="left:205px;top:702px;">ov</div>
  <div class="spin" style="left:235px;top:689px;width:80px;height:38px;"></div>
  <div class="t f21" style="left:238px;top:696px;">6</div>
  <div class="a" style="left:282px;top:693px;width:1px;height:24px;background:#ccc"></div>
  <div class="sb" style="left:283px;top:692px;width:28px;height:13px;"></div>
  <div class="sb" style="left:283px;top:707px;width:28px;height:15px;"></div>
  <div class="a" style="left:293px;top:695px;width:0;height:0;border-left:4px solid transparent;border-right:4px solid transparent;border-bottom:5px solid #000"></div>
  <div class="a" style="left:293px;top:712px;width:0;height:0;border-left:4px solid transparent;border-right:4px solid transparent;border-top:5px solid #000"></div>

  <svg width="335" height="1073" viewBox="0 0 335 1073" style="pointer-events:none">
   <g fill="none" stroke="#333" stroke-width="1.4">
    <polyline points="278,165 285,172 292,165"/>
    <polyline points="290,219 297,226 304,219"/>
    <polyline points="304,311 311,318 318,311"/>
    <polyline points="301,365 308,372 315,365"/>
   </g>
   <polyline points="18,421 24,427 34,416" fill="none" stroke="#555" stroke-width="2"/>
  </svg>
  <div class="a" style="left:5px;top:738px;width:327px;height:331px;background:#fff;border:2px solid #868a90;"></div>
</div>

<div class="a" style="left:0;top:1071px;width:1287px;height:3px;background:#1883d7"></div>
<!-- XOR lines -->
<div class="a" style="left:1510px;top:0;width:1px;height:1180px;background:#fff;mix-blend-mode:difference"></div>
<div class="a" style="left:334px;top:53px;width:1px;height:994px;background:#fff;mix-blend-mode:difference"></div>
</body></html>
